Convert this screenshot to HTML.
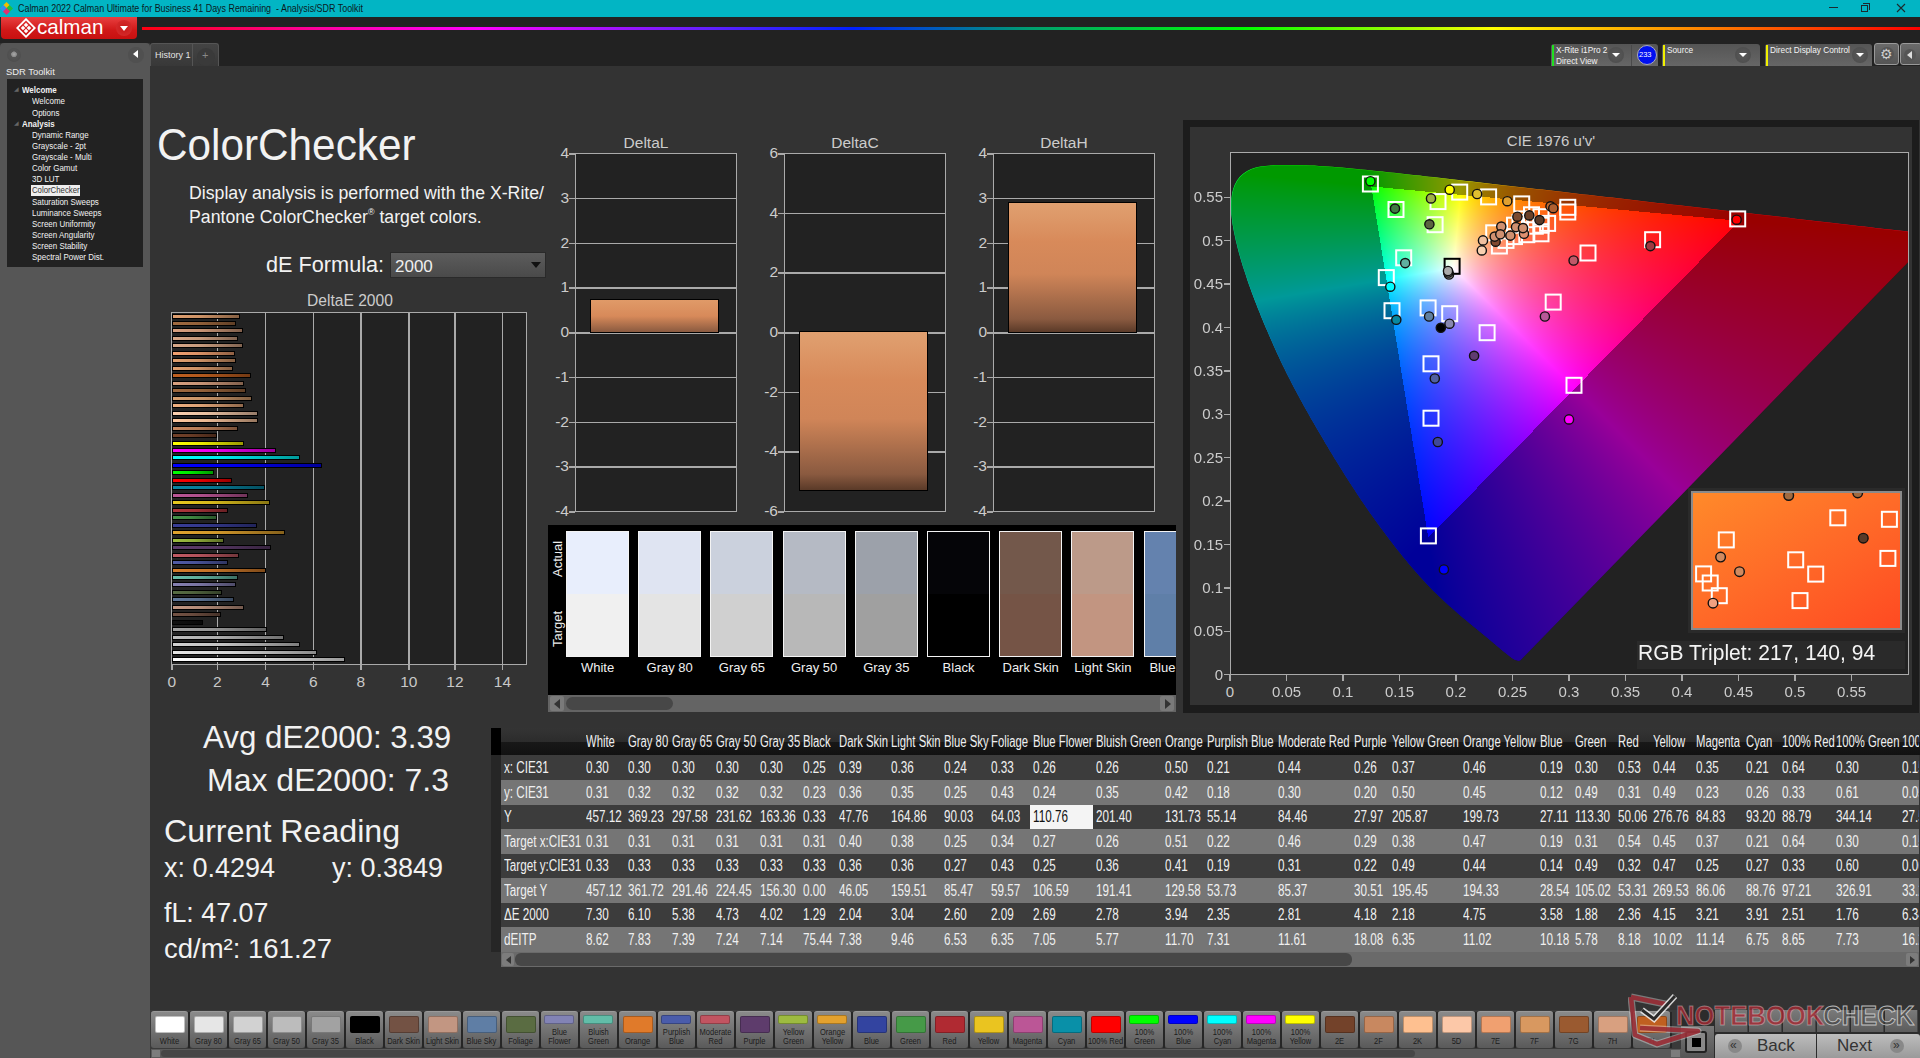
<!DOCTYPE html><html><head><meta charset="utf-8"><style>
*{margin:0;padding:0;box-sizing:border-box}
html,body{width:1920px;height:1058px;overflow:hidden;background:#333;font-family:"Liberation Sans",sans-serif;color:#eee}
.a{position:absolute}
.t{position:absolute;white-space:nowrap;line-height:1}
</style></head><body>

<div class="a" style="left:0;top:0;width:1920px;height:17px;background:#02b5c4"></div>
<div class="a" style="left:4px;top:3px;width:5px;height:5px;background:#f0c000;transform:rotate(45deg)"></div>
<div class="a" style="left:1px;top:6px;width:5px;height:5px;background:#3090f0;transform:rotate(45deg)"></div>
<div class="a" style="left:7px;top:6px;width:5px;height:5px;background:#20c040;transform:rotate(45deg)"></div>
<div class="a" style="left:4px;top:9px;width:5px;height:5px;background:#e03070;transform:rotate(45deg)"></div>
<div class="t" style="left:18px;top:3px;font-size:11px;color:#0a1a1e;transform:scaleX(0.81);transform-origin:0 0">Calman 2022 Calman Ultimate for Business 41 Days Remaining &nbsp;- Analysis/SDR Toolkit</div>
<div class="a" style="left:1829px;top:7px;width:9px;height:1px;background:#1a2a2e"></div>
<div class="a" style="left:1863px;top:3px;width:7px;height:7px;border:1px solid #1a2a2e;border-left:none;border-bottom:none"></div><div class="a" style="left:1861px;top:5px;width:7px;height:7px;border:1px solid #1a2a2e;background:#02b5c4"></div>
<svg class="a" style="left:1896px;top:3px" width="10" height="10"><path d="M1 1L9 9M9 1L1 9" stroke="#1a2a2e" stroke-width="1.1"/></svg>
<div class="a" style="left:0;top:17px;width:1920px;height:26px;background:#222"></div>
<div class="a" style="left:1px;top:17px;width:136px;height:22px;background:linear-gradient(#e84040,#d01818 60%,#c81010);border-radius:0 0 4px 4px"></div>
<div class="t" style="left:37px;top:17px;font-size:20.6px;color:#fff">calman</div>
<svg class="a" style="left:15.7px;top:18.1px" width="20" height="20"><g transform="rotate(45 10 10)"><rect x="3.8" y="3.8" width="12.4" height="12.4" fill="none" stroke="#fff" stroke-width="1.8"/><rect x="6.3" y="6.3" width="3.2" height="3.2" fill="#fff"/><rect x="10.5" y="6.3" width="3.2" height="3.2" fill="#fff"/><rect x="6.3" y="10.5" width="3.2" height="3.2" fill="#fff"/><rect x="10.5" y="10.5" width="3.2" height="3.2" fill="#fff"/></g></svg>
<div class="a" style="left:116px;top:20px;width:16px;height:16px;border-radius:8px;background:radial-gradient(#c81818,#d83030)"></div>
<div class="a" style="left:120px;top:26px;width:0;height:0;border-left:4px solid transparent;border-right:4px solid transparent;border-top:5px solid #fff"></div>
<div class="a" style="left:142px;top:27px;width:1778px;height:3px;background:linear-gradient(90deg,#ff0010 0%,#ff00a0 10%,#ff00ff 19%,#6020ff 32%,#0020ff 40%,#00a070 50%,#00ff00 62%,#b0ff00 72%,#ffff00 76%,#ffa000 85%,#ff0000 100%)"></div>
<div class="a" style="left:0;top:43px;width:150px;height:1015px;background:#565656;border-radius:4px 4px 0 0"></div>
<div class="a" style="left:7px;top:48px;width:14px;height:14px;border-radius:7px;background:radial-gradient(circle at 50% 45%,#aaa 0,#888 25%,#555 30%,#4e4e4e 70%,#5a5a5a 100%)"></div>
<div class="a" style="left:128px;top:47px;width:16px;height:16px;border-radius:8px;background:#505050"></div>
<div class="a" style="left:133px;top:50px;width:0;height:0;border-top:4px solid transparent;border-bottom:4px solid transparent;border-right:5px solid #fff"></div>
<div class="t" style="left:6px;top:67px;font-size:9.4px;color:#eee">SDR Toolkit</div>
<div class="a" style="left:7px;top:79px;width:136px;height:188px;background:#222"></div>
<div class="t" style="left:22px;top:86.3px;font-size:8.4px;color:#f2f2f2;font-weight:bold;transform:scaleX(0.95);transform-origin:0 0">Welcome</div>
<div class="t" style="left:32px;top:97.4px;font-size:8.4px;color:#f2f2f2;transform:scaleX(0.95);transform-origin:0 0">Welcome</div>
<div class="t" style="left:32px;top:108.5px;font-size:8.4px;color:#f2f2f2;transform:scaleX(0.95);transform-origin:0 0">Options</div>
<div class="t" style="left:22px;top:119.7px;font-size:8.4px;color:#f2f2f2;font-weight:bold;transform:scaleX(0.95);transform-origin:0 0">Analysis</div>
<div class="t" style="left:32px;top:130.8px;font-size:8.4px;color:#f2f2f2;transform:scaleX(0.95);transform-origin:0 0">Dynamic Range</div>
<div class="t" style="left:32px;top:141.9px;font-size:8.4px;color:#f2f2f2;transform:scaleX(0.95);transform-origin:0 0">Grayscale - 2pt</div>
<div class="t" style="left:32px;top:153.0px;font-size:8.4px;color:#f2f2f2;transform:scaleX(0.95);transform-origin:0 0">Grayscale - Multi</div>
<div class="t" style="left:32px;top:164.1px;font-size:8.4px;color:#f2f2f2;transform:scaleX(0.95);transform-origin:0 0">Color Gamut</div>
<div class="t" style="left:32px;top:175.3px;font-size:8.4px;color:#f2f2f2;transform:scaleX(0.95);transform-origin:0 0">3D LUT</div>
<div class="a" style="left:31px;top:185.1px;width:49px;height:10.5px;background:#eee"></div>
<div class="t" style="left:32px;top:186.4px;font-size:8.4px;color:#333;transform:scaleX(0.93);transform-origin:0 0">ColorChecker</div>
<div class="t" style="left:32px;top:197.5px;font-size:8.4px;color:#f2f2f2;transform:scaleX(0.95);transform-origin:0 0">Saturation Sweeps</div>
<div class="t" style="left:32px;top:208.6px;font-size:8.4px;color:#f2f2f2;transform:scaleX(0.95);transform-origin:0 0">Luminance Sweeps</div>
<div class="t" style="left:32px;top:219.7px;font-size:8.4px;color:#f2f2f2;transform:scaleX(0.95);transform-origin:0 0">Screen Uniformity</div>
<div class="t" style="left:32px;top:230.9px;font-size:8.4px;color:#f2f2f2;transform:scaleX(0.95);transform-origin:0 0">Screen Angularity</div>
<div class="t" style="left:32px;top:242.0px;font-size:8.4px;color:#f2f2f2;transform:scaleX(0.95);transform-origin:0 0">Screen Stability</div>
<div class="t" style="left:32px;top:253.1px;font-size:8.4px;color:#f2f2f2;transform:scaleX(0.95);transform-origin:0 0">Spectral Power Dist.</div>
<div class="t" style="left:14px;top:86px;font-size:6px;color:#666">&#9698;</div>
<div class="t" style="left:14px;top:120px;font-size:6px;color:#666">&#9698;</div>
<div class="a" style="left:150px;top:43px;width:1770px;height:23px;background:#222"></div>
<div class="a" style="left:150px;top:43px;width:69px;height:23px;background:linear-gradient(#444,#383838);border:1px solid #555;border-bottom:none;border-radius:3px 3px 0 0"></div>
<div class="a" style="left:192px;top:44px;width:1px;height:22px;background:#555"></div>
<div class="t" style="left:155px;top:51px;font-size:9px;color:#e4e4e4">History 1</div>
<div class="a" style="left:197px;top:48px;width:18px;height:18px;border-radius:9px;background:#3a3a3a"></div>
<div class="t" style="left:202px;top:50px;font-size:11px;color:#888">+</div>
<div class="a" style="left:1551px;top:44px;width:107px;height:22px;background:linear-gradient(#555,#666);border-radius:3px 3px 0 0"></div>
<div class="a" style="left:1552px;top:45px;width:2px;height:21px;background:#20e020"></div>
<div class="t" style="left:1556px;top:46.0px;font-size:8.7px;color:#f4f4f4;transform:scaleX(0.95);transform-origin:0 0">X-Rite i1Pro 2</div>
<div class="t" style="left:1556px;top:56.5px;font-size:8.7px;color:#f4f4f4;transform:scaleX(0.95);transform-origin:0 0">Direct View</div>
<div class="a" style="left:1662px;top:44px;width:98px;height:22px;background:linear-gradient(#555,#666);border-radius:3px 3px 0 0"></div>
<div class="a" style="left:1663px;top:45px;width:2px;height:21px;background:#f0f000"></div>
<div class="t" style="left:1667px;top:46.0px;font-size:8.7px;color:#f4f4f4;transform:scaleX(0.95);transform-origin:0 0">Source</div>
<div class="a" style="left:1765px;top:44px;width:107px;height:22px;background:linear-gradient(#555,#666);border-radius:3px 3px 0 0"></div>
<div class="a" style="left:1766px;top:45px;width:2px;height:21px;background:#f0f000"></div>
<div class="t" style="left:1770px;top:46.0px;font-size:8.7px;color:#f4f4f4;transform:scaleX(0.95);transform-origin:0 0">Direct Display Control</div>
<div class="a" style="left:1608px;top:47px;width:16px;height:16px;border-radius:8px;background:radial-gradient(#5a5a5a,#4a4a4a)"></div>
<div class="a" style="left:1612px;top:53px;width:0;height:0;border-left:4px solid transparent;border-right:4px solid transparent;border-top:4px solid #fff"></div>
<div class="a" style="left:1735px;top:47px;width:16px;height:16px;border-radius:8px;background:radial-gradient(#5a5a5a,#4a4a4a)"></div>
<div class="a" style="left:1739px;top:53px;width:0;height:0;border-left:4px solid transparent;border-right:4px solid transparent;border-top:4px solid #fff"></div>
<div class="a" style="left:1852px;top:47px;width:16px;height:16px;border-radius:8px;background:radial-gradient(#5a5a5a,#4a4a4a)"></div>
<div class="a" style="left:1856px;top:53px;width:0;height:0;border-left:4px solid transparent;border-right:4px solid transparent;border-top:4px solid #fff"></div>
<div class="a" style="left:1631px;top:45px;width:1px;height:21px;background:#4a4a4a"></div>
<div class="a" style="left:1637px;top:45px;width:20px;height:20px;border-radius:10px;background:#0010f0;border:1px solid #aab"></div>
<div class="t" style="left:1639px;top:51px;font-size:7.5px;color:#fff">233</div>
<div class="a" style="left:1874px;top:43px;width:25px;height:22px;background:linear-gradient(#6a6a6a,#555);border-radius:3px;border:1px solid #999"></div><div class="a" style="left:1880px;top:47px;width:14px;height:14px;border-radius:7px;background:#555"></div>
<div class="t" style="left:1880px;top:47px;font-size:14px;color:#ccc">&#9881;</div>
<div class="a" style="left:1900px;top:43px;width:22px;height:22px;background:linear-gradient(#6a6a6a,#555);border-radius:3px;border:1px solid #999"></div>
<div class="a" style="left:1904px;top:49px;width:12px;height:12px;border-radius:6px;background:#555"></div>
<div class="a" style="left:1907px;top:51px;width:0;height:0;border-top:4px solid transparent;border-bottom:4px solid transparent;border-right:5px solid #ddd"></div>
<div class="t" style="left:157px;top:123px;font-size:44.2px;color:#f2f2f2;transform:scaleX(0.957);transform-origin:0 0" id="title">ColorChecker</div>
<div class="t" style="left:189px;top:182px;font-size:18px;color:#f2f2f2;line-height:23.5px;transform:scaleX(0.983);transform-origin:0 0" id="desc">Display analysis is performed with the X-Rite/<br>Pantone ColorChecker<span style="font-size:9px;position:relative;top:-8px;line-height:0">&reg;</span> target colors.</div>
<div class="t" style="left:266px;top:254px;font-size:21.7px;color:#f2f2f2" id="def">dE Formula:</div>
<div class="a" style="left:390px;top:252px;width:156px;height:26px;background:linear-gradient(#5c5c5c,#4a4a4a);border:1px solid #2a2a2a"></div>
<div class="t" style="left:395px;top:258px;font-size:17px;color:#eee">2000</div>
<div class="a" style="left:531px;top:262px;width:0;height:0;border-left:5px solid transparent;border-right:5px solid transparent;border-top:6px solid #111"></div>
<div class="t" style="left:307px;top:293px;font-size:15.6px;color:#ccc" id="detitle">DeltaE 2000</div>
<div class="a" style="left:170.8px;top:312.3px;width:356.4px;height:352.9px;background:#222;border:1.5px solid #aaa"></div>
<div class="a" style="left:216.7px;top:313px;width:1.5px;height:351.5px;background:#aaa"></div>
<div class="a" style="left:264.8px;top:313px;width:1.5px;height:351.5px;background:#aaa"></div>
<div class="a" style="left:312.7px;top:313px;width:1.5px;height:351.5px;background:#aaa"></div>
<div class="a" style="left:360.2px;top:313px;width:1.5px;height:351.5px;background:#aaa"></div>
<div class="a" style="left:408.1px;top:313px;width:1.5px;height:351.5px;background:#aaa"></div>
<div class="a" style="left:454.2px;top:313px;width:1.5px;height:351.5px;background:#aaa"></div>
<div class="a" style="left:501.7px;top:313px;width:1.5px;height:351.5px;background:#aaa"></div>
<div class="a" style="left:171.2px;top:664.5px;width:1.5px;height:5px;background:#aaa"></div>
<div class="t" style="left:151.9px;top:674px;width:40px;text-align:center;font-size:15.5px;color:#c8c8c8">0</div>
<div class="a" style="left:216.7px;top:664.5px;width:1.5px;height:5px;background:#aaa"></div>
<div class="t" style="left:197.4px;top:674px;width:40px;text-align:center;font-size:15.5px;color:#c8c8c8">2</div>
<div class="a" style="left:264.8px;top:664.5px;width:1.5px;height:5px;background:#aaa"></div>
<div class="t" style="left:245.5px;top:674px;width:40px;text-align:center;font-size:15.5px;color:#c8c8c8">4</div>
<div class="a" style="left:312.7px;top:664.5px;width:1.5px;height:5px;background:#aaa"></div>
<div class="t" style="left:293.4px;top:674px;width:40px;text-align:center;font-size:15.5px;color:#c8c8c8">6</div>
<div class="a" style="left:360.2px;top:664.5px;width:1.5px;height:5px;background:#aaa"></div>
<div class="t" style="left:340.9px;top:674px;width:40px;text-align:center;font-size:15.5px;color:#c8c8c8">8</div>
<div class="a" style="left:408.1px;top:664.5px;width:1.5px;height:5px;background:#aaa"></div>
<div class="t" style="left:388.8px;top:674px;width:40px;text-align:center;font-size:15.5px;color:#c8c8c8">10</div>
<div class="a" style="left:454.2px;top:664.5px;width:1.5px;height:5px;background:#aaa"></div>
<div class="t" style="left:434.9px;top:674px;width:40px;text-align:center;font-size:15.5px;color:#c8c8c8">12</div>
<div class="a" style="left:501.7px;top:664.5px;width:1.5px;height:5px;background:#aaa"></div>
<div class="t" style="left:482.4px;top:674px;width:40px;text-align:center;font-size:15.5px;color:#c8c8c8">14</div>
<div class="a" style="left:171.5px;top:657.1px;width:173.3px;height:5px;background:linear-gradient(90deg,#ffffff,#eaeaea 40%,#999999);border:1px solid #000"></div>
<div class="a" style="left:171.5px;top:649.6px;width:145.0px;height:5px;background:linear-gradient(90deg,#e6e6e6,#d3d3d3 40%,#8a8a8a);border:1px solid #000"></div>
<div class="a" style="left:171.5px;top:642.2px;width:128.0px;height:5px;background:linear-gradient(90deg,#d2d2d2,#c1c1c1 40%,#7e7e7e);border:1px solid #000"></div>
<div class="a" style="left:171.5px;top:634.7px;width:112.6px;height:5px;background:linear-gradient(90deg,#bcbcbc,#acacac 40%,#707070);border:1px solid #000"></div>
<div class="a" style="left:171.5px;top:627.2px;width:95.9px;height:5px;background:linear-gradient(90deg,#a2a2a2,#959595 40%,#616161);border:1px solid #000"></div>
<div class="a" style="left:171.5px;top:619.8px;width:31.4px;height:5px;background:linear-gradient(90deg,#101010,#0e0e0e 40%,#090909);border:1px solid #000"></div>
<div class="a" style="left:171.5px;top:612.3px;width:49.1px;height:5px;background:linear-gradient(90deg,#735244,#694b3e 40%,#453128);border:1px solid #000"></div>
<div class="a" style="left:171.5px;top:604.8px;width:72.7px;height:5px;background:linear-gradient(90deg,#c29682,#b28a77 40%,#745a4e);border:1px solid #000"></div>
<div class="a" style="left:171.5px;top:597.3px;width:62.4px;height:5px;background:linear-gradient(90deg,#627a9d,#5a7090 40%,#3a495e);border:1px solid #000"></div>
<div class="a" style="left:171.5px;top:589.9px;width:50.3px;height:5px;background:linear-gradient(90deg,#576c43,#50633d 40%,#344028);border:1px solid #000"></div>
<div class="a" style="left:171.5px;top:582.4px;width:64.5px;height:5px;background:linear-gradient(90deg,#8580b1,#7a75a2 40%,#4f4c6a);border:1px solid #000"></div>
<div class="a" style="left:171.5px;top:574.9px;width:66.6px;height:5px;background:linear-gradient(90deg,#67bdaa,#5ead9c 40%,#3d7166);border:1px solid #000"></div>
<div class="a" style="left:171.5px;top:567.5px;width:94.0px;height:5px;background:linear-gradient(90deg,#d67e2c,#c47328 40%,#804b1a);border:1px solid #000"></div>
<div class="a" style="left:171.5px;top:560.0px;width:56.5px;height:5px;background:linear-gradient(90deg,#505ba6,#495398 40%,#303663);border:1px solid #000"></div>
<div class="a" style="left:171.5px;top:552.5px;width:67.3px;height:5px;background:linear-gradient(90deg,#c15a63,#b1525b 40%,#73363b);border:1px solid #000"></div>
<div class="a" style="left:171.5px;top:545.1px;width:99.6px;height:5px;background:linear-gradient(90deg,#5e3c6c,#563763 40%,#382440);border:1px solid #000"></div>
<div class="a" style="left:171.5px;top:537.6px;width:52.4px;height:5px;background:linear-gradient(90deg,#9dbc40,#90ac3a 40%,#5e7026);border:1px solid #000"></div>
<div class="a" style="left:171.5px;top:530.1px;width:113.1px;height:5px;background:linear-gradient(90deg,#e0a32e,#ce952a 40%,#86611b);border:1px solid #000"></div>
<div class="a" style="left:171.5px;top:522.6px;width:85.5px;height:5px;background:linear-gradient(90deg,#383d96,#33388a 40%,#21245a);border:1px solid #000"></div>
<div class="a" style="left:171.5px;top:515.2px;width:45.4px;height:5px;background:linear-gradient(90deg,#469449,#408843 40%,#2a582b);border:1px solid #000"></div>
<div class="a" style="left:171.5px;top:507.7px;width:56.7px;height:5px;background:linear-gradient(90deg,#af363c,#a13137 40%,#692024);border:1px solid #000"></div>
<div class="a" style="left:171.5px;top:500.2px;width:98.9px;height:5px;background:linear-gradient(90deg,#e7c71f,#d4b71c 40%,#8a7712);border:1px solid #000"></div>
<div class="a" style="left:171.5px;top:492.8px;width:76.8px;height:5px;background:linear-gradient(90deg,#bb5695,#ac4f89 40%,#703359);border:1px solid #000"></div>
<div class="a" style="left:171.5px;top:485.3px;width:93.3px;height:5px;background:linear-gradient(90deg,#0885a1,#077a94 40%,#044f60);border:1px solid #000"></div>
<div class="a" style="left:171.5px;top:477.8px;width:60.2px;height:5px;background:linear-gradient(90deg,#ff0000,#ea0000 40%,#990000);border:1px solid #000"></div>
<div class="a" style="left:171.5px;top:470.4px;width:42.5px;height:5px;background:linear-gradient(90deg,#00ff00,#00ea00 40%,#009900);border:1px solid #000"></div>
<div class="a" style="left:171.5px;top:462.9px;width:150.6px;height:5px;background:linear-gradient(90deg,#0000ff,#0000ea 40%,#000099);border:1px solid #000"></div>
<div class="a" style="left:171.5px;top:455.4px;width:128.9px;height:5px;background:linear-gradient(90deg,#00ffff,#00eaea 40%,#009999);border:1px solid #000"></div>
<div class="a" style="left:171.5px;top:447.9px;width:104.4px;height:5px;background:linear-gradient(90deg,#ff00ff,#ea00ea 40%,#990099);border:1px solid #000"></div>
<div class="a" style="left:171.5px;top:440.5px;width:72.5px;height:5px;background:linear-gradient(90deg,#ffff00,#eaea00 40%,#999900);border:1px solid #000"></div>
<div class="a" style="left:171.5px;top:433.0px;width:45.6px;height:5px;background:linear-gradient(90deg,#73422a,#693c26 40%,#452719);border:1px solid #000"></div>
<div class="a" style="left:171.5px;top:425.5px;width:66.8px;height:5px;background:linear-gradient(90deg,#c88860,#b87d58 40%,#785139);border:1px solid #000"></div>
<div class="a" style="left:171.5px;top:418.1px;width:86.2px;height:5px;background:linear-gradient(90deg,#fec8a0,#e9b893 40%,#987860);border:1px solid #000"></div>
<div class="a" style="left:171.5px;top:410.6px;width:86.9px;height:5px;background:linear-gradient(90deg,#fcd0b0,#e7bfa1 40%,#977c69);border:1px solid #000"></div>
<div class="a" style="left:171.5px;top:403.1px;width:72.7px;height:5px;background:linear-gradient(90deg,#f0b080,#dca175 40%,#90694c);border:1px solid #000"></div>
<div class="a" style="left:171.5px;top:395.7px;width:80.3px;height:5px;background:linear-gradient(90deg,#d8a070,#c69367 40%,#816043);border:1px solid #000"></div>
<div class="a" style="left:171.5px;top:388.2px;width:74.9px;height:5px;background:linear-gradient(90deg,#a06a40,#93613a 40%,#603f26);border:1px solid #000"></div>
<div class="a" style="left:171.5px;top:380.7px;width:72.7px;height:5px;background:linear-gradient(90deg,#d8a080,#c69375 40%,#81604c);border:1px solid #000"></div>
<div class="a" style="left:171.5px;top:373.2px;width:79.1px;height:5px;background:linear-gradient(90deg,#c06020,#b0581d 40%,#733913);border:1px solid #000"></div>
<div class="a" style="left:171.5px;top:365.8px;width:61.7px;height:5px;background:linear-gradient(90deg,#e0a070,#ce9367 40%,#866043);border:1px solid #000"></div>
<div class="a" style="left:171.5px;top:358.3px;width:64.7px;height:5px;background:linear-gradient(90deg,#e0a070,#ce9367 40%,#866043);border:1px solid #000"></div>
<div class="a" style="left:171.5px;top:350.8px;width:63.5px;height:5px;background:linear-gradient(90deg,#f0a070,#dc9367 40%,#906043);border:1px solid #000"></div>
<div class="a" style="left:171.5px;top:343.4px;width:71.6px;height:5px;background:linear-gradient(90deg,#d8a888,#c69a7d 40%,#816451);border:1px solid #000"></div>
<div class="a" style="left:171.5px;top:335.9px;width:66.8px;height:5px;background:linear-gradient(90deg,#d8a888,#c69a7d 40%,#816451);border:1px solid #000"></div>
<div class="a" style="left:171.5px;top:328.4px;width:71.3px;height:5px;background:linear-gradient(90deg,#d8a080,#c69375 40%,#81604c);border:1px solid #000"></div>
<div class="a" style="left:171.5px;top:321.0px;width:64.7px;height:5px;background:linear-gradient(90deg,#a06a40,#93613a 40%,#603f26);border:1px solid #000"></div>
<div class="a" style="left:171.5px;top:313.5px;width:68.7px;height:5px;background:linear-gradient(90deg,#e0a070,#ce9367 40%,#866043);border:1px solid #000"></div>
<div class="t" style="left:565px;top:135px;width:162px;text-align:center;font-size:15.5px;color:#ccc">DeltaL</div>
<div class="a" style="left:574.5px;top:153px;width:162.5px;height:359px;background:#222;border:1.5px solid #aaa"></div>
<div class="a" style="left:569px;top:153.0px;width:6px;height:1.5px;background:#aaa"></div>
<div class="t" style="left:535px;top:145.0px;width:34px;text-align:right;font-size:15.5px;color:#ccc">4</div>
<div class="a" style="left:575px;top:197.8px;width:162px;height:1.5px;background:#aaa"></div>
<div class="a" style="left:569px;top:197.8px;width:6px;height:1.5px;background:#aaa"></div>
<div class="t" style="left:535px;top:189.8px;width:34px;text-align:right;font-size:15.5px;color:#ccc">3</div>
<div class="a" style="left:575px;top:242.5px;width:162px;height:1.5px;background:#aaa"></div>
<div class="a" style="left:569px;top:242.5px;width:6px;height:1.5px;background:#aaa"></div>
<div class="t" style="left:535px;top:234.5px;width:34px;text-align:right;font-size:15.5px;color:#ccc">2</div>
<div class="a" style="left:575px;top:287.2px;width:162px;height:1.5px;background:#aaa"></div>
<div class="a" style="left:569px;top:287.2px;width:6px;height:1.5px;background:#aaa"></div>
<div class="t" style="left:535px;top:279.2px;width:34px;text-align:right;font-size:15.5px;color:#ccc">1</div>
<div class="a" style="left:575px;top:332.0px;width:162px;height:1.5px;background:#aaa"></div>
<div class="a" style="left:569px;top:332.0px;width:6px;height:1.5px;background:#aaa"></div>
<div class="t" style="left:535px;top:324.0px;width:34px;text-align:right;font-size:15.5px;color:#ccc">0</div>
<div class="a" style="left:575px;top:376.8px;width:162px;height:1.5px;background:#aaa"></div>
<div class="a" style="left:569px;top:376.8px;width:6px;height:1.5px;background:#aaa"></div>
<div class="t" style="left:535px;top:368.8px;width:34px;text-align:right;font-size:15.5px;color:#ccc">-1</div>
<div class="a" style="left:575px;top:421.5px;width:162px;height:1.5px;background:#aaa"></div>
<div class="a" style="left:569px;top:421.5px;width:6px;height:1.5px;background:#aaa"></div>
<div class="t" style="left:535px;top:413.5px;width:34px;text-align:right;font-size:15.5px;color:#ccc">-2</div>
<div class="a" style="left:575px;top:466.2px;width:162px;height:1.5px;background:#aaa"></div>
<div class="a" style="left:569px;top:466.2px;width:6px;height:1.5px;background:#aaa"></div>
<div class="t" style="left:535px;top:458.2px;width:34px;text-align:right;font-size:15.5px;color:#ccc">-3</div>
<div class="a" style="left:569px;top:511.0px;width:6px;height:1.5px;background:#aaa"></div>
<div class="t" style="left:535px;top:503.0px;width:34px;text-align:right;font-size:15.5px;color:#ccc">-4</div>
<div class="a" style="left:590px;top:299px;width:129px;height:34px;background:linear-gradient(#e09a68,#d88a5a 50%,#8a5a40 100%);border:1.5px solid #000"></div>
<div class="t" style="left:774px;top:135px;width:162px;text-align:center;font-size:15.5px;color:#ccc">DeltaC</div>
<div class="a" style="left:783.5px;top:153px;width:162.5px;height:359px;background:#222;border:1.5px solid #aaa"></div>
<div class="a" style="left:778px;top:153.0px;width:6px;height:1.5px;background:#aaa"></div>
<div class="t" style="left:744px;top:145.0px;width:34px;text-align:right;font-size:15.5px;color:#ccc">6</div>
<div class="a" style="left:784px;top:212.7px;width:162px;height:1.5px;background:#aaa"></div>
<div class="a" style="left:778px;top:212.7px;width:6px;height:1.5px;background:#aaa"></div>
<div class="t" style="left:744px;top:204.7px;width:34px;text-align:right;font-size:15.5px;color:#ccc">4</div>
<div class="a" style="left:784px;top:272.3px;width:162px;height:1.5px;background:#aaa"></div>
<div class="a" style="left:778px;top:272.3px;width:6px;height:1.5px;background:#aaa"></div>
<div class="t" style="left:744px;top:264.3px;width:34px;text-align:right;font-size:15.5px;color:#ccc">2</div>
<div class="a" style="left:784px;top:332.0px;width:162px;height:1.5px;background:#aaa"></div>
<div class="a" style="left:778px;top:332.0px;width:6px;height:1.5px;background:#aaa"></div>
<div class="t" style="left:744px;top:324.0px;width:34px;text-align:right;font-size:15.5px;color:#ccc">0</div>
<div class="a" style="left:784px;top:391.7px;width:162px;height:1.5px;background:#aaa"></div>
<div class="a" style="left:778px;top:391.7px;width:6px;height:1.5px;background:#aaa"></div>
<div class="t" style="left:744px;top:383.7px;width:34px;text-align:right;font-size:15.5px;color:#ccc">-2</div>
<div class="a" style="left:784px;top:451.3px;width:162px;height:1.5px;background:#aaa"></div>
<div class="a" style="left:778px;top:451.3px;width:6px;height:1.5px;background:#aaa"></div>
<div class="t" style="left:744px;top:443.3px;width:34px;text-align:right;font-size:15.5px;color:#ccc">-4</div>
<div class="a" style="left:778px;top:511.0px;width:6px;height:1.5px;background:#aaa"></div>
<div class="t" style="left:744px;top:503.0px;width:34px;text-align:right;font-size:15.5px;color:#ccc">-6</div>
<div class="a" style="left:799px;top:331px;width:129px;height:160px;background:linear-gradient(#e0a070 0%,#d88a5a 30%,#d08558 55%,#8a5a40 90%,#5a3a28 100%);border:1.5px solid #000"></div>
<div class="t" style="left:983px;top:135px;width:162px;text-align:center;font-size:15.5px;color:#ccc">DeltaH</div>
<div class="a" style="left:992.5px;top:153px;width:162.5px;height:359px;background:#222;border:1.5px solid #aaa"></div>
<div class="a" style="left:987px;top:153.0px;width:6px;height:1.5px;background:#aaa"></div>
<div class="t" style="left:953px;top:145.0px;width:34px;text-align:right;font-size:15.5px;color:#ccc">4</div>
<div class="a" style="left:993px;top:197.8px;width:162px;height:1.5px;background:#aaa"></div>
<div class="a" style="left:987px;top:197.8px;width:6px;height:1.5px;background:#aaa"></div>
<div class="t" style="left:953px;top:189.8px;width:34px;text-align:right;font-size:15.5px;color:#ccc">3</div>
<div class="a" style="left:993px;top:242.5px;width:162px;height:1.5px;background:#aaa"></div>
<div class="a" style="left:987px;top:242.5px;width:6px;height:1.5px;background:#aaa"></div>
<div class="t" style="left:953px;top:234.5px;width:34px;text-align:right;font-size:15.5px;color:#ccc">2</div>
<div class="a" style="left:993px;top:287.2px;width:162px;height:1.5px;background:#aaa"></div>
<div class="a" style="left:987px;top:287.2px;width:6px;height:1.5px;background:#aaa"></div>
<div class="t" style="left:953px;top:279.2px;width:34px;text-align:right;font-size:15.5px;color:#ccc">1</div>
<div class="a" style="left:993px;top:332.0px;width:162px;height:1.5px;background:#aaa"></div>
<div class="a" style="left:987px;top:332.0px;width:6px;height:1.5px;background:#aaa"></div>
<div class="t" style="left:953px;top:324.0px;width:34px;text-align:right;font-size:15.5px;color:#ccc">0</div>
<div class="a" style="left:993px;top:376.8px;width:162px;height:1.5px;background:#aaa"></div>
<div class="a" style="left:987px;top:376.8px;width:6px;height:1.5px;background:#aaa"></div>
<div class="t" style="left:953px;top:368.8px;width:34px;text-align:right;font-size:15.5px;color:#ccc">-1</div>
<div class="a" style="left:993px;top:421.5px;width:162px;height:1.5px;background:#aaa"></div>
<div class="a" style="left:987px;top:421.5px;width:6px;height:1.5px;background:#aaa"></div>
<div class="t" style="left:953px;top:413.5px;width:34px;text-align:right;font-size:15.5px;color:#ccc">-2</div>
<div class="a" style="left:993px;top:466.2px;width:162px;height:1.5px;background:#aaa"></div>
<div class="a" style="left:987px;top:466.2px;width:6px;height:1.5px;background:#aaa"></div>
<div class="t" style="left:953px;top:458.2px;width:34px;text-align:right;font-size:15.5px;color:#ccc">-3</div>
<div class="a" style="left:987px;top:511.0px;width:6px;height:1.5px;background:#aaa"></div>
<div class="t" style="left:953px;top:503.0px;width:34px;text-align:right;font-size:15.5px;color:#ccc">-4</div>
<div class="a" style="left:1008px;top:202px;width:129px;height:131px;background:linear-gradient(#e0a070 0%,#d88a5a 30%,#d08558 55%,#8a5a40 90%,#5a3a28 100%);border:1.5px solid #000"></div>
<div class="a" style="left:548px;top:525px;width:628px;height:170px;background:#000;overflow:hidden">
<div class="t" style="left:1px;top:62px;font-size:13px;color:#eee;transform:rotate(-90deg);transform-origin:0 0;top:52px;left:3px">Actual</div>
<div class="t" style="left:3px;top:122px;font-size:13px;color:#eee;transform:rotate(-90deg);transform-origin:0 0">Target</div>
<div class="a" style="left:18.0px;top:6px;width:63px;height:126px;border:1.5px solid #f4f4f4;background:linear-gradient(#e8eefc 50%,#f0f0f0 50%)"></div>
<div class="t" style="left:8.0px;top:135.5px;width:83px;text-align:center;font-size:13px;color:#f0f0f0">White</div>
<div class="a" style="left:90.2px;top:6px;width:63px;height:126px;border:1.5px solid #f4f4f4;background:linear-gradient(#dfe4f2 50%,#e4e4e4 50%)"></div>
<div class="t" style="left:80.2px;top:135.5px;width:83px;text-align:center;font-size:13px;color:#f0f0f0">Gray 80</div>
<div class="a" style="left:162.4px;top:6px;width:63px;height:126px;border:1.5px solid #f4f4f4;background:linear-gradient(#cbd1dd 50%,#d0d0d0 50%)"></div>
<div class="t" style="left:152.4px;top:135.5px;width:83px;text-align:center;font-size:13px;color:#f0f0f0">Gray 65</div>
<div class="a" style="left:234.6px;top:6px;width:63px;height:126px;border:1.5px solid #f4f4f4;background:linear-gradient(#b5bac4 50%,#b8b8b8 50%)"></div>
<div class="t" style="left:224.6px;top:135.5px;width:83px;text-align:center;font-size:13px;color:#f0f0f0">Gray 50</div>
<div class="a" style="left:306.8px;top:6px;width:63px;height:126px;border:1.5px solid #f4f4f4;background:linear-gradient(#9ca1aa 50%,#a0a0a0 50%)"></div>
<div class="t" style="left:296.8px;top:135.5px;width:83px;text-align:center;font-size:13px;color:#f0f0f0">Gray 35</div>
<div class="a" style="left:379.0px;top:6px;width:63px;height:126px;border:1.5px solid #f4f4f4;background:linear-gradient(#050508 50%,#000000 50%)"></div>
<div class="t" style="left:369.0px;top:135.5px;width:83px;text-align:center;font-size:13px;color:#f0f0f0">Black</div>
<div class="a" style="left:451.2px;top:6px;width:63px;height:126px;border:1.5px solid #f4f4f4;background:linear-gradient(#73584b 50%,#755446 50%)"></div>
<div class="t" style="left:441.2px;top:135.5px;width:83px;text-align:center;font-size:13px;color:#f0f0f0">Dark Skin</div>
<div class="a" style="left:523.4px;top:6px;width:63px;height:126px;border:1.5px solid #f4f4f4;background:linear-gradient(#bc9a89 50%,#c29581 50%)"></div>
<div class="t" style="left:513.4px;top:135.5px;width:83px;text-align:center;font-size:13px;color:#f0f0f0">Light Skin</div>
<div class="a" style="left:595.6px;top:6px;width:63px;height:126px;border:1.5px solid #f4f4f4;background:linear-gradient(#6482ae 50%,#5f7fa8 50%)"></div>
<div class="t" style="left:585.6px;top:135.5px;width:83px;text-align:center;font-size:13px;color:#f0f0f0">Blue Sky</div>
</div>
<div class="a" style="left:548px;top:695px;width:628px;height:17px;background:#646464"></div>
<div class="a" style="left:550px;top:696px;width:14px;height:15px;background:#7a7a7a;border-radius:2px"></div>
<div class="a" style="left:554px;top:699px;width:0;height:0;border-top:5px solid transparent;border-bottom:5px solid transparent;border-right:6px solid #333"></div>
<div class="a" style="left:566px;top:697px;width:107px;height:13px;background:#474747;border-radius:7px"></div>
<div class="a" style="left:1160px;top:696px;width:14px;height:15px;background:#7a7a7a;border-radius:2px"></div>
<div class="a" style="left:1165px;top:699px;width:0;height:0;border-top:5px solid transparent;border-bottom:5px solid transparent;border-left:6px solid #333"></div>
<div class="a" style="left:1183px;top:120px;width:736px;height:593px;background:#1c1c1c"></div>
<div class="a" style="left:1190px;top:127px;width:722px;height:578px;background:#333"></div>
<div class="t" style="left:1190px;top:133px;width:722px;text-align:center;font-size:15px;color:#ccc" id="ciet">CIE 1976 u'v'</div>
<div class="a" style="left:1230px;top:152px;width:679px;height:523px;background:#222;border:1.5px solid #aaa;overflow:hidden">
<svg class="a" style="left:-1.5px;top:-1.5px" width="679" height="523"><defs><clipPath id="loc"><path d="M290.3,508.4 L289.0,508.9 L285.0,508.0 L282.1,506.2 L278.1,503.1 L275.2,500.7 L271.8,497.9 L268.3,495.0 L265.3,492.4 L260.6,488.6 L256.1,484.8 L252.4,481.8 L248.5,478.5 L244.2,475.0 L240.8,472.2 L237.3,469.3 L233.6,466.2 L229.7,462.9 L226.4,460.1 L223.1,457.1 L219.5,454.0 L215.9,450.7 L212.1,447.1 L209.3,444.4 L206.5,441.7 L203.6,438.9 L200.7,436.0 L197.6,432.8 L194.4,429.3 L190.9,425.6 L188.7,423.0 L186.3,420.3 L183.9,417.6 L181.5,414.7 L178.9,411.7 L176.4,408.6 L173.7,405.4 L171.1,402.1 L168.4,398.7 L165.6,395.2 L162.8,391.6 L160.6,388.7 L158.4,385.8 L156.1,382.7 L153.8,379.6 L151.4,376.5 L149.1,373.2 L146.7,369.9 L144.3,366.6 L141.9,363.2 L139.4,359.7 L137.0,356.2 L134.5,352.6 L132.0,348.9 L129.6,345.2 L127.4,342.0 L125.2,338.6 L123.0,335.2 L120.7,331.7 L118.5,328.2 L116.2,324.7 L113.9,321.1 L111.7,317.4 L109.4,313.8 L107.1,310.1 L104.8,306.4 L102.5,302.6 L100.3,298.9 L98.0,295.1 L95.8,291.4 L93.6,287.6 L91.5,284.1 L89.4,280.5 L87.3,276.9 L85.2,273.2 L83.0,269.5 L80.9,265.9 L78.8,262.1 L76.7,258.4 L74.6,254.7 L72.6,251.0 L70.5,247.3 L68.5,243.5 L66.5,239.8 L64.6,236.2 L62.6,232.5 L60.8,228.8 L58.9,225.2 L57.0,221.4 L55.1,217.6 L53.2,213.7 L51.4,209.9 L49.6,206.0 L47.8,202.2 L46.1,198.4 L44.3,194.6 L42.7,190.8 L41.0,187.0 L39.4,183.3 L37.8,179.6 L36.2,176.0 L34.7,172.4 L33.3,168.9 L31.8,165.4 L30.1,161.1 L28.4,157.0 L26.8,152.8 L25.2,148.7 L23.7,144.7 L22.2,140.7 L20.8,136.8 L19.4,132.9 L18.1,129.2 L16.9,125.5 L15.7,121.8 L14.5,118.3 L13.4,114.9 L11.9,110.1 L10.6,105.5 L9.3,101.0 L8.2,96.7 L7.2,92.5 L6.2,88.5 L5.4,84.7 L4.6,81.0 L3.9,77.4 L3.0,72.2 L2.4,67.5 L1.9,63.1 L1.7,58.9 L1.6,55.0 L1.6,51.2 L2.0,46.0 L2.7,41.3 L3.8,37.1 L5.2,33.3 L7.6,28.8 L10.5,25.0 L13.9,21.9 L17.6,19.4 L21.7,17.5 L26.1,16.1 L30.8,15.0 L35.6,14.4 L40.7,13.9 L45.9,13.6 L51.2,13.5 L56.6,13.4 L60.6,13.4 L64.6,13.4 L68.6,13.5 L72.7,13.6 L76.8,13.7 L81.0,13.9 L85.2,14.1 L89.5,14.4 L93.9,14.7 L98.4,15.0 L103.0,15.3 L107.6,15.7 L112.4,16.1 L117.3,16.5 L122.2,17.0 L127.4,17.5 L131.5,17.9 L135.8,18.3 L140.1,18.7 L144.5,19.2 L149.0,19.7 L152.9,20.1 L156.8,20.5 L160.7,20.9 L164.7,21.3 L168.8,21.8 L173.0,22.2 L177.3,22.7 L181.6,23.2 L186.0,23.7 L190.4,24.1 L194.9,24.7 L199.6,25.2 L203.6,25.6 L207.7,26.1 L211.8,26.5 L216.0,27.0 L220.2,27.5 L224.5,28.0 L228.9,28.5 L232.8,28.9 L236.7,29.4 L240.7,29.8 L244.7,30.3 L248.7,30.8 L252.9,31.2 L257.0,31.7 L261.2,32.2 L265.4,32.7 L269.7,33.2 L274.1,33.7 L278.5,34.2 L282.9,34.7 L287.4,35.2 L291.9,35.7 L296.4,36.2 L300.5,36.7 L304.7,37.2 L308.8,37.7 L313.0,38.1 L317.2,38.6 L321.5,39.1 L325.8,39.6 L330.1,40.1 L334.4,40.6 L338.3,41.0 L342.3,41.5 L346.3,42.0 L350.3,42.4 L354.3,42.9 L358.3,43.3 L362.4,43.8 L366.4,44.3 L370.5,44.7 L374.6,45.2 L378.7,45.7 L382.8,46.1 L386.9,46.6 L391.1,47.1 L395.3,47.6 L399.4,48.1 L403.6,48.5 L407.7,49.0 L411.8,49.5 L415.9,50.0 L420.0,50.4 L424.0,50.9 L428.1,51.4 L432.1,51.8 L436.1,52.3 L440.1,52.7 L444.1,53.2 L448.1,53.6 L452.0,54.1 L456.0,54.6 L460.4,55.1 L464.8,55.6 L469.2,56.1 L473.6,56.6 L477.9,57.1 L482.3,57.6 L486.5,58.1 L490.8,58.5 L494.9,59.0 L499.5,59.6 L504.1,60.1 L508.6,60.6 L513.0,61.1 L517.4,61.6 L521.7,62.1 L525.9,62.6 L530.1,63.0 L534.8,63.6 L539.4,64.1 L544.0,64.6 L548.4,65.1 L552.8,65.6 L557.1,66.1 L561.3,66.6 L566.0,67.2 L570.6,67.7 L575.1,68.2 L579.5,68.7 L583.7,69.2 L587.8,69.7 L592.6,70.2 L597.2,70.8 L601.7,71.3 L606.0,71.8 L610.1,72.2 L614.8,72.8 L619.0,73.2 L623.4,73.8 L628.8,74.4 L632.6,74.8 L636.9,75.3 L641.4,75.8 L646.1,76.4 L650.7,76.9 L655.0,77.4 L658.8,77.8 L664.7,78.5 L669.8,79.1 L674.4,79.6 L678.5,80.1 L685.0,80.8 L690.2,81.4 L695.9,82.1 L700.5,82.6 L704.4,83.1 Z"/></clipPath></defs></svg>
<div class="a" style="left:-1.5px;top:-1.5px;width:679px;height:523px;clip-path:url(#loc);background:radial-gradient(ellipse 90px 90px at 223.5px 116.2px,rgba(255,255,255,1) 0%,rgba(255,255,255,0.6) 35%,rgba(255,255,255,0) 100%),conic-gradient(from 0deg at 223.5px 116.2px,#d0ff00 0deg,#ffff00 11deg,#ff9000 45deg,#ff0000 80deg,#ff0060 105deg,#ff00ff 136deg,#8000ff 160deg,#0010ff 178deg,#0020ff 200deg,#0080ff 235deg,#00ffff 262deg,#00ff80 282deg,#00ff00 300deg,#40ff00 330deg,#d0ff00 360deg)"></div>
<svg class="a" style="left:-1.5px;top:-1.5px" width="679" height="523"><path d="M290.3,508.4 L289.0,508.9 L285.0,508.0 L282.1,506.2 L278.1,503.1 L275.2,500.7 L271.8,497.9 L268.3,495.0 L265.3,492.4 L260.6,488.6 L256.1,484.8 L252.4,481.8 L248.5,478.5 L244.2,475.0 L240.8,472.2 L237.3,469.3 L233.6,466.2 L229.7,462.9 L226.4,460.1 L223.1,457.1 L219.5,454.0 L215.9,450.7 L212.1,447.1 L209.3,444.4 L206.5,441.7 L203.6,438.9 L200.7,436.0 L197.6,432.8 L194.4,429.3 L190.9,425.6 L188.7,423.0 L186.3,420.3 L183.9,417.6 L181.5,414.7 L178.9,411.7 L176.4,408.6 L173.7,405.4 L171.1,402.1 L168.4,398.7 L165.6,395.2 L162.8,391.6 L160.6,388.7 L158.4,385.8 L156.1,382.7 L153.8,379.6 L151.4,376.5 L149.1,373.2 L146.7,369.9 L144.3,366.6 L141.9,363.2 L139.4,359.7 L137.0,356.2 L134.5,352.6 L132.0,348.9 L129.6,345.2 L127.4,342.0 L125.2,338.6 L123.0,335.2 L120.7,331.7 L118.5,328.2 L116.2,324.7 L113.9,321.1 L111.7,317.4 L109.4,313.8 L107.1,310.1 L104.8,306.4 L102.5,302.6 L100.3,298.9 L98.0,295.1 L95.8,291.4 L93.6,287.6 L91.5,284.1 L89.4,280.5 L87.3,276.9 L85.2,273.2 L83.0,269.5 L80.9,265.9 L78.8,262.1 L76.7,258.4 L74.6,254.7 L72.6,251.0 L70.5,247.3 L68.5,243.5 L66.5,239.8 L64.6,236.2 L62.6,232.5 L60.8,228.8 L58.9,225.2 L57.0,221.4 L55.1,217.6 L53.2,213.7 L51.4,209.9 L49.6,206.0 L47.8,202.2 L46.1,198.4 L44.3,194.6 L42.7,190.8 L41.0,187.0 L39.4,183.3 L37.8,179.6 L36.2,176.0 L34.7,172.4 L33.3,168.9 L31.8,165.4 L30.1,161.1 L28.4,157.0 L26.8,152.8 L25.2,148.7 L23.7,144.7 L22.2,140.7 L20.8,136.8 L19.4,132.9 L18.1,129.2 L16.9,125.5 L15.7,121.8 L14.5,118.3 L13.4,114.9 L11.9,110.1 L10.6,105.5 L9.3,101.0 L8.2,96.7 L7.2,92.5 L6.2,88.5 L5.4,84.7 L4.6,81.0 L3.9,77.4 L3.0,72.2 L2.4,67.5 L1.9,63.1 L1.7,58.9 L1.6,55.0 L1.6,51.2 L2.0,46.0 L2.7,41.3 L3.8,37.1 L5.2,33.3 L7.6,28.8 L10.5,25.0 L13.9,21.9 L17.6,19.4 L21.7,17.5 L26.1,16.1 L30.8,15.0 L35.6,14.4 L40.7,13.9 L45.9,13.6 L51.2,13.5 L56.6,13.4 L60.6,13.4 L64.6,13.4 L68.6,13.5 L72.7,13.6 L76.8,13.7 L81.0,13.9 L85.2,14.1 L89.5,14.4 L93.9,14.7 L98.4,15.0 L103.0,15.3 L107.6,15.7 L112.4,16.1 L117.3,16.5 L122.2,17.0 L127.4,17.5 L131.5,17.9 L135.8,18.3 L140.1,18.7 L144.5,19.2 L149.0,19.7 L152.9,20.1 L156.8,20.5 L160.7,20.9 L164.7,21.3 L168.8,21.8 L173.0,22.2 L177.3,22.7 L181.6,23.2 L186.0,23.7 L190.4,24.1 L194.9,24.7 L199.6,25.2 L203.6,25.6 L207.7,26.1 L211.8,26.5 L216.0,27.0 L220.2,27.5 L224.5,28.0 L228.9,28.5 L232.8,28.9 L236.7,29.4 L240.7,29.8 L244.7,30.3 L248.7,30.8 L252.9,31.2 L257.0,31.7 L261.2,32.2 L265.4,32.7 L269.7,33.2 L274.1,33.7 L278.5,34.2 L282.9,34.7 L287.4,35.2 L291.9,35.7 L296.4,36.2 L300.5,36.7 L304.7,37.2 L308.8,37.7 L313.0,38.1 L317.2,38.6 L321.5,39.1 L325.8,39.6 L330.1,40.1 L334.4,40.6 L338.3,41.0 L342.3,41.5 L346.3,42.0 L350.3,42.4 L354.3,42.9 L358.3,43.3 L362.4,43.8 L366.4,44.3 L370.5,44.7 L374.6,45.2 L378.7,45.7 L382.8,46.1 L386.9,46.6 L391.1,47.1 L395.3,47.6 L399.4,48.1 L403.6,48.5 L407.7,49.0 L411.8,49.5 L415.9,50.0 L420.0,50.4 L424.0,50.9 L428.1,51.4 L432.1,51.8 L436.1,52.3 L440.1,52.7 L444.1,53.2 L448.1,53.6 L452.0,54.1 L456.0,54.6 L460.4,55.1 L464.8,55.6 L469.2,56.1 L473.6,56.6 L477.9,57.1 L482.3,57.6 L486.5,58.1 L490.8,58.5 L494.9,59.0 L499.5,59.6 L504.1,60.1 L508.6,60.6 L513.0,61.1 L517.4,61.6 L521.7,62.1 L525.9,62.6 L530.1,63.0 L534.8,63.6 L539.4,64.1 L544.0,64.6 L548.4,65.1 L552.8,65.6 L557.1,66.1 L561.3,66.6 L566.0,67.2 L570.6,67.7 L575.1,68.2 L579.5,68.7 L583.7,69.2 L587.8,69.7 L592.6,70.2 L597.2,70.8 L601.7,71.3 L606.0,71.8 L610.1,72.2 L614.8,72.8 L619.0,73.2 L623.4,73.8 L628.8,74.4 L632.6,74.8 L636.9,75.3 L641.4,75.8 L646.1,76.4 L650.7,76.9 L655.0,77.4 L658.8,77.8 L664.7,78.5 L669.8,79.1 L674.4,79.6 L678.5,80.1 L685.0,80.8 L690.2,81.4 L695.9,82.1 L700.5,82.6 L704.4,83.1 Z M509.3,68.8 L141.2,34.5 L198.2,385.6 Z" fill="rgba(0,0,0,0.42)" fill-rule="evenodd"/></svg>
<canvas id="cv" class="a" style="left:-1.5px;top:-1.5px" width="679" height="523"></canvas>
<script>(function(){var c=document.getElementById('cv');if(!c||!c.getContext)return;var ctx=c.getContext('2d');var W=c.width,H=c.height;
var off=document.createElement('canvas');off.width=W;off.height=H;var o=off.getContext('2d');var im=o.createImageData(W,H);var d=im.data;var G=0.85;
for(var j=0;j<H;j++){var v=(674.7-(152+j+0.5))/868;for(var i=0;i<W;i++){var u=(i+0.5)/1130;
var den=6*u-16*v+12;var x=9*u/den,y=4*v/den;if(y<1e-4)y=1e-4;var X=x/y,Z=(1-x-y)/y;
var r=3.2406*X-1.5372-0.4986*Z,g=-0.9689*X+1.8758+0.0415*Z,b=0.0557*X-0.2040+1.0570*Z;
var f=(r<0||g<0||b<0)?0.6:1;if(r<0)r=0;if(g<0)g=0;if(b<0)b=0;var m=Math.max(r,g,b);if(m<=0)m=1;
var k=(j*W+i)*4;d[k]=255*f*Math.pow(r/m,G);d[k+1]=255*f*Math.pow(g/m,G);d[k+2]=255*f*Math.pow(b/m,G);d[k+3]=255;}}
o.putImageData(im,0,0);ctx.beginPath();ctx.moveTo(290.3,508.4);ctx.lineTo(289.0,508.9);ctx.lineTo(285.0,508.0);ctx.lineTo(282.1,506.2);ctx.lineTo(278.1,503.1);ctx.lineTo(275.2,500.7);ctx.lineTo(271.8,497.9);ctx.lineTo(268.3,495.0);ctx.lineTo(265.3,492.4);ctx.lineTo(260.6,488.6);ctx.lineTo(256.1,484.8);ctx.lineTo(252.4,481.8);ctx.lineTo(248.5,478.5);ctx.lineTo(244.2,475.0);ctx.lineTo(240.8,472.2);ctx.lineTo(237.3,469.3);ctx.lineTo(233.6,466.2);ctx.lineTo(229.7,462.9);ctx.lineTo(226.4,460.1);ctx.lineTo(223.1,457.1);ctx.lineTo(219.5,454.0);ctx.lineTo(215.9,450.7);ctx.lineTo(212.1,447.1);ctx.lineTo(209.3,444.4);ctx.lineTo(206.5,441.7);ctx.lineTo(203.6,438.9);ctx.lineTo(200.7,436.0);ctx.lineTo(197.6,432.8);ctx.lineTo(194.4,429.3);ctx.lineTo(190.9,425.6);ctx.lineTo(188.7,423.0);ctx.lineTo(186.3,420.3);ctx.lineTo(183.9,417.6);ctx.lineTo(181.5,414.7);ctx.lineTo(178.9,411.7);ctx.lineTo(176.4,408.6);ctx.lineTo(173.7,405.4);ctx.lineTo(171.1,402.1);ctx.lineTo(168.4,398.7);ctx.lineTo(165.6,395.2);ctx.lineTo(162.8,391.6);ctx.lineTo(160.6,388.7);ctx.lineTo(158.4,385.8);ctx.lineTo(156.1,382.7);ctx.lineTo(153.8,379.6);ctx.lineTo(151.4,376.5);ctx.lineTo(149.1,373.2);ctx.lineTo(146.7,369.9);ctx.lineTo(144.3,366.6);ctx.lineTo(141.9,363.2);ctx.lineTo(139.4,359.7);ctx.lineTo(137.0,356.2);ctx.lineTo(134.5,352.6);ctx.lineTo(132.0,348.9);ctx.lineTo(129.6,345.2);ctx.lineTo(127.4,342.0);ctx.lineTo(125.2,338.6);ctx.lineTo(123.0,335.2);ctx.lineTo(120.7,331.7);ctx.lineTo(118.5,328.2);ctx.lineTo(116.2,324.7);ctx.lineTo(113.9,321.1);ctx.lineTo(111.7,317.4);ctx.lineTo(109.4,313.8);ctx.lineTo(107.1,310.1);ctx.lineTo(104.8,306.4);ctx.lineTo(102.5,302.6);ctx.lineTo(100.3,298.9);ctx.lineTo(98.0,295.1);ctx.lineTo(95.8,291.4);ctx.lineTo(93.6,287.6);ctx.lineTo(91.5,284.1);ctx.lineTo(89.4,280.5);ctx.lineTo(87.3,276.9);ctx.lineTo(85.2,273.2);ctx.lineTo(83.0,269.5);ctx.lineTo(80.9,265.9);ctx.lineTo(78.8,262.1);ctx.lineTo(76.7,258.4);ctx.lineTo(74.6,254.7);ctx.lineTo(72.6,251.0);ctx.lineTo(70.5,247.3);ctx.lineTo(68.5,243.5);ctx.lineTo(66.5,239.8);ctx.lineTo(64.6,236.2);ctx.lineTo(62.6,232.5);ctx.lineTo(60.8,228.8);ctx.lineTo(58.9,225.2);ctx.lineTo(57.0,221.4);ctx.lineTo(55.1,217.6);ctx.lineTo(53.2,213.7);ctx.lineTo(51.4,209.9);ctx.lineTo(49.6,206.0);ctx.lineTo(47.8,202.2);ctx.lineTo(46.1,198.4);ctx.lineTo(44.3,194.6);ctx.lineTo(42.7,190.8);ctx.lineTo(41.0,187.0);ctx.lineTo(39.4,183.3);ctx.lineTo(37.8,179.6);ctx.lineTo(36.2,176.0);ctx.lineTo(34.7,172.4);ctx.lineTo(33.3,168.9);ctx.lineTo(31.8,165.4);ctx.lineTo(30.1,161.1);ctx.lineTo(28.4,157.0);ctx.lineTo(26.8,152.8);ctx.lineTo(25.2,148.7);ctx.lineTo(23.7,144.7);ctx.lineTo(22.2,140.7);ctx.lineTo(20.8,136.8);ctx.lineTo(19.4,132.9);ctx.lineTo(18.1,129.2);ctx.lineTo(16.9,125.5);ctx.lineTo(15.7,121.8);ctx.lineTo(14.5,118.3);ctx.lineTo(13.4,114.9);ctx.lineTo(11.9,110.1);ctx.lineTo(10.6,105.5);ctx.lineTo(9.3,101.0);ctx.lineTo(8.2,96.7);ctx.lineTo(7.2,92.5);ctx.lineTo(6.2,88.5);ctx.lineTo(5.4,84.7);ctx.lineTo(4.6,81.0);ctx.lineTo(3.9,77.4);ctx.lineTo(3.0,72.2);ctx.lineTo(2.4,67.5);ctx.lineTo(1.9,63.1);ctx.lineTo(1.7,58.9);ctx.lineTo(1.6,55.0);ctx.lineTo(1.6,51.2);ctx.lineTo(2.0,46.0);ctx.lineTo(2.7,41.3);ctx.lineTo(3.8,37.1);ctx.lineTo(5.2,33.3);ctx.lineTo(7.6,28.8);ctx.lineTo(10.5,25.0);ctx.lineTo(13.9,21.9);ctx.lineTo(17.6,19.4);ctx.lineTo(21.7,17.5);ctx.lineTo(26.1,16.1);ctx.lineTo(30.8,15.0);ctx.lineTo(35.6,14.4);ctx.lineTo(40.7,13.9);ctx.lineTo(45.9,13.6);ctx.lineTo(51.2,13.5);ctx.lineTo(56.6,13.4);ctx.lineTo(60.6,13.4);ctx.lineTo(64.6,13.4);ctx.lineTo(68.6,13.5);ctx.lineTo(72.7,13.6);ctx.lineTo(76.8,13.7);ctx.lineTo(81.0,13.9);ctx.lineTo(85.2,14.1);ctx.lineTo(89.5,14.4);ctx.lineTo(93.9,14.7);ctx.lineTo(98.4,15.0);ctx.lineTo(103.0,15.3);ctx.lineTo(107.6,15.7);ctx.lineTo(112.4,16.1);ctx.lineTo(117.3,16.5);ctx.lineTo(122.2,17.0);ctx.lineTo(127.4,17.5);ctx.lineTo(131.5,17.9);ctx.lineTo(135.8,18.3);ctx.lineTo(140.1,18.7);ctx.lineTo(144.5,19.2);ctx.lineTo(149.0,19.7);ctx.lineTo(152.9,20.1);ctx.lineTo(156.8,20.5);ctx.lineTo(160.7,20.9);ctx.lineTo(164.7,21.3);ctx.lineTo(168.8,21.8);ctx.lineTo(173.0,22.2);ctx.lineTo(177.3,22.7);ctx.lineTo(181.6,23.2);ctx.lineTo(186.0,23.7);ctx.lineTo(190.4,24.1);ctx.lineTo(194.9,24.7);ctx.lineTo(199.6,25.2);ctx.lineTo(203.6,25.6);ctx.lineTo(207.7,26.1);ctx.lineTo(211.8,26.5);ctx.lineTo(216.0,27.0);ctx.lineTo(220.2,27.5);ctx.lineTo(224.5,28.0);ctx.lineTo(228.9,28.5);ctx.lineTo(232.8,28.9);ctx.lineTo(236.7,29.4);ctx.lineTo(240.7,29.8);ctx.lineTo(244.7,30.3);ctx.lineTo(248.7,30.8);ctx.lineTo(252.9,31.2);ctx.lineTo(257.0,31.7);ctx.lineTo(261.2,32.2);ctx.lineTo(265.4,32.7);ctx.lineTo(269.7,33.2);ctx.lineTo(274.1,33.7);ctx.lineTo(278.5,34.2);ctx.lineTo(282.9,34.7);ctx.lineTo(287.4,35.2);ctx.lineTo(291.9,35.7);ctx.lineTo(296.4,36.2);ctx.lineTo(300.5,36.7);ctx.lineTo(304.7,37.2);ctx.lineTo(308.8,37.7);ctx.lineTo(313.0,38.1);ctx.lineTo(317.2,38.6);ctx.lineTo(321.5,39.1);ctx.lineTo(325.8,39.6);ctx.lineTo(330.1,40.1);ctx.lineTo(334.4,40.6);ctx.lineTo(338.3,41.0);ctx.lineTo(342.3,41.5);ctx.lineTo(346.3,42.0);ctx.lineTo(350.3,42.4);ctx.lineTo(354.3,42.9);ctx.lineTo(358.3,43.3);ctx.lineTo(362.4,43.8);ctx.lineTo(366.4,44.3);ctx.lineTo(370.5,44.7);ctx.lineTo(374.6,45.2);ctx.lineTo(378.7,45.7);ctx.lineTo(382.8,46.1);ctx.lineTo(386.9,46.6);ctx.lineTo(391.1,47.1);ctx.lineTo(395.3,47.6);ctx.lineTo(399.4,48.1);ctx.lineTo(403.6,48.5);ctx.lineTo(407.7,49.0);ctx.lineTo(411.8,49.5);ctx.lineTo(415.9,50.0);ctx.lineTo(420.0,50.4);ctx.lineTo(424.0,50.9);ctx.lineTo(428.1,51.4);ctx.lineTo(432.1,51.8);ctx.lineTo(436.1,52.3);ctx.lineTo(440.1,52.7);ctx.lineTo(444.1,53.2);ctx.lineTo(448.1,53.6);ctx.lineTo(452.0,54.1);ctx.lineTo(456.0,54.6);ctx.lineTo(460.4,55.1);ctx.lineTo(464.8,55.6);ctx.lineTo(469.2,56.1);ctx.lineTo(473.6,56.6);ctx.lineTo(477.9,57.1);ctx.lineTo(482.3,57.6);ctx.lineTo(486.5,58.1);ctx.lineTo(490.8,58.5);ctx.lineTo(494.9,59.0);ctx.lineTo(499.5,59.6);ctx.lineTo(504.1,60.1);ctx.lineTo(508.6,60.6);ctx.lineTo(513.0,61.1);ctx.lineTo(517.4,61.6);ctx.lineTo(521.7,62.1);ctx.lineTo(525.9,62.6);ctx.lineTo(530.1,63.0);ctx.lineTo(534.8,63.6);ctx.lineTo(539.4,64.1);ctx.lineTo(544.0,64.6);ctx.lineTo(548.4,65.1);ctx.lineTo(552.8,65.6);ctx.lineTo(557.1,66.1);ctx.lineTo(561.3,66.6);ctx.lineTo(566.0,67.2);ctx.lineTo(570.6,67.7);ctx.lineTo(575.1,68.2);ctx.lineTo(579.5,68.7);ctx.lineTo(583.7,69.2);ctx.lineTo(587.8,69.7);ctx.lineTo(592.6,70.2);ctx.lineTo(597.2,70.8);ctx.lineTo(601.7,71.3);ctx.lineTo(606.0,71.8);ctx.lineTo(610.1,72.2);ctx.lineTo(614.8,72.8);ctx.lineTo(619.0,73.2);ctx.lineTo(623.4,73.8);ctx.lineTo(628.8,74.4);ctx.lineTo(632.6,74.8);ctx.lineTo(636.9,75.3);ctx.lineTo(641.4,75.8);ctx.lineTo(646.1,76.4);ctx.lineTo(650.7,76.9);ctx.lineTo(655.0,77.4);ctx.lineTo(658.8,77.8);ctx.lineTo(664.7,78.5);ctx.lineTo(669.8,79.1);ctx.lineTo(674.4,79.6);ctx.lineTo(678.5,80.1);ctx.lineTo(685.0,80.8);ctx.lineTo(690.2,81.4);ctx.lineTo(695.9,82.1);ctx.lineTo(700.5,82.6);ctx.lineTo(704.4,83.1);ctx.closePath();ctx.clip();ctx.drawImage(off,0,0);})();</script>
<svg class="a" style="left:-1.5px;top:-1.5px" width="679" height="523">
<rect x="214.6" y="106.8" width="15" height="15" fill="none" stroke="#000" stroke-width="2"/>
<rect x="132.9" y="24.5" width="15" height="15" fill="none" stroke="#fff" stroke-width="2"/>
<rect x="158.5" y="50.0" width="15" height="15" fill="none" stroke="#fff" stroke-width="2"/>
<rect x="200.5" y="42.1" width="15" height="15" fill="none" stroke="#fff" stroke-width="2"/>
<rect x="222.2" y="32.6" width="15" height="15" fill="none" stroke="#fff" stroke-width="2"/>
<rect x="251.1" y="37.4" width="15" height="15" fill="none" stroke="#fff" stroke-width="2"/>
<rect x="284.2" y="44.4" width="15" height="15" fill="none" stroke="#fff" stroke-width="2"/>
<rect x="330.3" y="47.8" width="15" height="15" fill="none" stroke="#fff" stroke-width="2"/>
<rect x="330.3" y="52.5" width="15" height="15" fill="none" stroke="#fff" stroke-width="2"/>
<rect x="197.6" y="65.2" width="15" height="15" fill="none" stroke="#fff" stroke-width="2"/>
<rect x="166.2" y="98.3" width="15" height="15" fill="none" stroke="#fff" stroke-width="2"/>
<rect x="148.8" y="118.1" width="15" height="15" fill="none" stroke="#fff" stroke-width="2"/>
<rect x="154.5" y="151.2" width="15" height="15" fill="none" stroke="#fff" stroke-width="2"/>
<rect x="190.6" y="148.4" width="15" height="15" fill="none" stroke="#fff" stroke-width="2"/>
<rect x="212.2" y="154.2" width="15" height="15" fill="none" stroke="#fff" stroke-width="2"/>
<rect x="249.6" y="173.2" width="15" height="15" fill="none" stroke="#fff" stroke-width="2"/>
<rect x="193.5" y="204.3" width="15" height="15" fill="none" stroke="#fff" stroke-width="2"/>
<rect x="500.2" y="59.4" width="15" height="15" fill="none" stroke="#fff" stroke-width="2"/>
<rect x="415.1" y="80.2" width="15" height="15" fill="none" stroke="#fff" stroke-width="2"/>
<rect x="350.5" y="93.5" width="15" height="15" fill="none" stroke="#fff" stroke-width="2"/>
<rect x="315.7" y="142.6" width="15" height="15" fill="none" stroke="#fff" stroke-width="2"/>
<rect x="336.5" y="225.8" width="15" height="15" fill="none" stroke="#fff" stroke-width="2"/>
<rect x="193.5" y="258.7" width="15" height="15" fill="none" stroke="#fff" stroke-width="2"/>
<rect x="190.9" y="376.4" width="15" height="15" fill="none" stroke="#fff" stroke-width="2"/>
<rect x="256.2" y="73.3" width="15" height="15" fill="none" stroke="#fff" stroke-width="2"/>
<rect x="261.9" y="86.5" width="15" height="15" fill="none" stroke="#fff" stroke-width="2"/>
<rect x="268.5" y="80.9" width="15" height="15" fill="none" stroke="#fff" stroke-width="2"/>
<rect x="277.0" y="65.7" width="15" height="15" fill="none" stroke="#fff" stroke-width="2"/>
<rect x="277.0" y="77.1" width="15" height="15" fill="none" stroke="#fff" stroke-width="2"/>
<rect x="289.3" y="75.2" width="15" height="15" fill="none" stroke="#fff" stroke-width="2"/>
<rect x="303.5" y="57.2" width="15" height="15" fill="none" stroke="#fff" stroke-width="2"/>
<rect x="303.5" y="65.7" width="15" height="15" fill="none" stroke="#fff" stroke-width="2"/>
<rect x="303.5" y="74.3" width="15" height="15" fill="none" stroke="#fff" stroke-width="2"/>
<rect x="310.1" y="63.9" width="15" height="15" fill="none" stroke="#fff" stroke-width="2"/>
<rect x="297.8" y="66.7" width="15" height="15" fill="none" stroke="#fff" stroke-width="2"/>
<rect x="282.5" y="62.9" width="15" height="15" fill="none" stroke="#fff" stroke-width="2"/>
<rect x="294.0" y="55.3" width="15" height="15" fill="none" stroke="#fff" stroke-width="2"/>
<circle cx="219.0" cy="122.5" r="4.6" fill="#888" stroke="#111" stroke-width="1.4"/>
<circle cx="218.3" cy="120.5" r="4.6" fill="#999" stroke="#111" stroke-width="1.4"/>
<circle cx="218.0" cy="119.0" r="4.6" fill="#aaa" stroke="#111" stroke-width="1.4"/>
<circle cx="140.4" cy="29.2" r="4.6" fill="#00ff00" stroke="#111" stroke-width="1.4"/>
<circle cx="165.0" cy="56.6" r="4.6" fill="#3f7a42" stroke="#111" stroke-width="1.4"/>
<circle cx="201.0" cy="46.4" r="4.6" fill="#a0b048" stroke="#111" stroke-width="1.4"/>
<circle cx="219.7" cy="37.7" r="4.6" fill="#ffff00" stroke="#111" stroke-width="1.4"/>
<circle cx="247.1" cy="42.0" r="4.6" fill="#e0c030" stroke="#111" stroke-width="1.4"/>
<circle cx="277.3" cy="49.2" r="4.6" fill="#e0a030" stroke="#111" stroke-width="1.4"/>
<circle cx="320.5" cy="54.3" r="4.6" fill="#c06a30" stroke="#111" stroke-width="1.4"/>
<circle cx="323.3" cy="56.2" r="4.6" fill="#b06030" stroke="#111" stroke-width="1.4"/>
<circle cx="199.4" cy="72.3" r="4.6" fill="#5a6440" stroke="#111" stroke-width="1.4"/>
<circle cx="175.2" cy="111.1" r="4.6" fill="#60b0a0" stroke="#111" stroke-width="1.4"/>
<circle cx="160.3" cy="134.7" r="4.6" fill="#00ffff" stroke="#111" stroke-width="1.4"/>
<circle cx="166.3" cy="167.8" r="4.6" fill="#0888a0" stroke="#111" stroke-width="1.4"/>
<circle cx="199.1" cy="164.5" r="4.6" fill="#6080a0" stroke="#111" stroke-width="1.4"/>
<circle cx="219.5" cy="171.7" r="4.6" fill="#8888b0" stroke="#111" stroke-width="1.4"/>
<circle cx="210.8" cy="175.8" r="4.6" fill="#000" stroke="#111" stroke-width="1.4"/>
<circle cx="343.6" cy="108.5" r="4.6" fill="#c05868" stroke="#111" stroke-width="1.4"/>
<circle cx="314.9" cy="164.5" r="4.6" fill="#b85898" stroke="#111" stroke-width="1.4"/>
<circle cx="244.1" cy="203.8" r="4.6" fill="#603c70" stroke="#111" stroke-width="1.4"/>
<circle cx="204.8" cy="226.5" r="4.6" fill="#5060a0" stroke="#111" stroke-width="1.4"/>
<circle cx="339.0" cy="267.4" r="4.6" fill="#ff00ff" stroke="#111" stroke-width="1.4"/>
<circle cx="207.8" cy="290.0" r="4.6" fill="#404898" stroke="#111" stroke-width="1.4"/>
<circle cx="213.9" cy="417.5" r="4.6" fill="#0000ff" stroke="#111" stroke-width="1.4"/>
<circle cx="420.4" cy="94.1" r="4.6" fill="#a03840" stroke="#111" stroke-width="1.4"/>
<circle cx="506.6" cy="67.7" r="4.6" fill="#ff0000" stroke="#111" stroke-width="1.4"/>
<circle cx="253.0" cy="88.4" r="4.6" fill="#f0c0a0" stroke="#111" stroke-width="1.4"/>
<circle cx="251.8" cy="98.4" r="4.6" fill="#f8d0b0" stroke="#111" stroke-width="1.4"/>
<circle cx="265.6" cy="89.7" r="4.6" fill="#804830" stroke="#111" stroke-width="1.4"/>
<circle cx="264.7" cy="84.6" r="4.6" fill="#d09070" stroke="#111" stroke-width="1.4"/>
<circle cx="271.3" cy="74.6" r="4.6" fill="#d09070" stroke="#111" stroke-width="1.4"/>
<circle cx="270.3" cy="82.3" r="4.6" fill="#d09070" stroke="#111" stroke-width="1.4"/>
<circle cx="280.4" cy="83.6" r="4.6" fill="#d09070" stroke="#111" stroke-width="1.4"/>
<circle cx="287.4" cy="64.7" r="4.6" fill="#7a4a30" stroke="#111" stroke-width="1.4"/>
<circle cx="286.0" cy="75.1" r="4.6" fill="#d09070" stroke="#111" stroke-width="1.4"/>
<circle cx="294.0" cy="81.8" r="4.6" fill="#e09070" stroke="#111" stroke-width="1.4"/>
<circle cx="293.0" cy="76.1" r="4.6" fill="#d09070" stroke="#111" stroke-width="1.4"/>
<circle cx="299.3" cy="63.4" r="4.6" fill="#6a4028" stroke="#111" stroke-width="1.4"/>
<circle cx="309.5" cy="68.1" r="4.6" fill="#5a3a28" stroke="#111" stroke-width="1.4"/>
</svg>
</div>
<div class="a" style="left:1224px;top:673.95px;width:6px;height:1.5px;background:#aaa"></div>
<div class="t" style="left:1170px;top:666.7px;width:53px;text-align:right;font-size:15px;color:#ccc">0</div>
<div class="a" style="left:1224px;top:630.55px;width:6px;height:1.5px;background:#aaa"></div>
<div class="t" style="left:1170px;top:623.3px;width:53px;text-align:right;font-size:15px;color:#ccc">0.05</div>
<div class="a" style="left:1224px;top:587.15px;width:6px;height:1.5px;background:#aaa"></div>
<div class="t" style="left:1170px;top:579.9px;width:53px;text-align:right;font-size:15px;color:#ccc">0.1</div>
<div class="a" style="left:1224px;top:543.75px;width:6px;height:1.5px;background:#aaa"></div>
<div class="t" style="left:1170px;top:536.5px;width:53px;text-align:right;font-size:15px;color:#ccc">0.15</div>
<div class="a" style="left:1224px;top:500.35px;width:6px;height:1.5px;background:#aaa"></div>
<div class="t" style="left:1170px;top:493.1px;width:53px;text-align:right;font-size:15px;color:#ccc">0.2</div>
<div class="a" style="left:1224px;top:456.95px;width:6px;height:1.5px;background:#aaa"></div>
<div class="t" style="left:1170px;top:449.7px;width:53px;text-align:right;font-size:15px;color:#ccc">0.25</div>
<div class="a" style="left:1224px;top:413.55px;width:6px;height:1.5px;background:#aaa"></div>
<div class="t" style="left:1170px;top:406.3px;width:53px;text-align:right;font-size:15px;color:#ccc">0.3</div>
<div class="a" style="left:1224px;top:370.15px;width:6px;height:1.5px;background:#aaa"></div>
<div class="t" style="left:1170px;top:362.9px;width:53px;text-align:right;font-size:15px;color:#ccc">0.35</div>
<div class="a" style="left:1224px;top:326.75px;width:6px;height:1.5px;background:#aaa"></div>
<div class="t" style="left:1170px;top:319.5px;width:53px;text-align:right;font-size:15px;color:#ccc">0.4</div>
<div class="a" style="left:1224px;top:283.35px;width:6px;height:1.5px;background:#aaa"></div>
<div class="t" style="left:1170px;top:276.1px;width:53px;text-align:right;font-size:15px;color:#ccc">0.45</div>
<div class="a" style="left:1224px;top:239.95px;width:6px;height:1.5px;background:#aaa"></div>
<div class="t" style="left:1170px;top:232.7px;width:53px;text-align:right;font-size:15px;color:#ccc">0.5</div>
<div class="a" style="left:1224px;top:196.55px;width:6px;height:1.5px;background:#aaa"></div>
<div class="t" style="left:1170px;top:189.3px;width:53px;text-align:right;font-size:15px;color:#ccc">0.55</div>
<div class="a" style="left:1229.25px;top:675px;width:1.5px;height:6px;background:#aaa"></div>
<div class="t" style="left:1205.0px;top:684px;width:50px;text-align:center;font-size:15px;color:#ccc">0</div>
<div class="a" style="left:1285.75px;top:675px;width:1.5px;height:6px;background:#aaa"></div>
<div class="t" style="left:1261.5px;top:684px;width:50px;text-align:center;font-size:15px;color:#ccc">0.05</div>
<div class="a" style="left:1342.25px;top:675px;width:1.5px;height:6px;background:#aaa"></div>
<div class="t" style="left:1318.0px;top:684px;width:50px;text-align:center;font-size:15px;color:#ccc">0.1</div>
<div class="a" style="left:1398.75px;top:675px;width:1.5px;height:6px;background:#aaa"></div>
<div class="t" style="left:1374.5px;top:684px;width:50px;text-align:center;font-size:15px;color:#ccc">0.15</div>
<div class="a" style="left:1455.25px;top:675px;width:1.5px;height:6px;background:#aaa"></div>
<div class="t" style="left:1431.0px;top:684px;width:50px;text-align:center;font-size:15px;color:#ccc">0.2</div>
<div class="a" style="left:1511.75px;top:675px;width:1.5px;height:6px;background:#aaa"></div>
<div class="t" style="left:1487.5px;top:684px;width:50px;text-align:center;font-size:15px;color:#ccc">0.25</div>
<div class="a" style="left:1568.25px;top:675px;width:1.5px;height:6px;background:#aaa"></div>
<div class="t" style="left:1544.0px;top:684px;width:50px;text-align:center;font-size:15px;color:#ccc">0.3</div>
<div class="a" style="left:1624.75px;top:675px;width:1.5px;height:6px;background:#aaa"></div>
<div class="t" style="left:1600.5px;top:684px;width:50px;text-align:center;font-size:15px;color:#ccc">0.35</div>
<div class="a" style="left:1681.25px;top:675px;width:1.5px;height:6px;background:#aaa"></div>
<div class="t" style="left:1657.0px;top:684px;width:50px;text-align:center;font-size:15px;color:#ccc">0.4</div>
<div class="a" style="left:1737.75px;top:675px;width:1.5px;height:6px;background:#aaa"></div>
<div class="t" style="left:1713.5px;top:684px;width:50px;text-align:center;font-size:15px;color:#ccc">0.45</div>
<div class="a" style="left:1794.25px;top:675px;width:1.5px;height:6px;background:#aaa"></div>
<div class="t" style="left:1770.0px;top:684px;width:50px;text-align:center;font-size:15px;color:#ccc">0.5</div>
<div class="a" style="left:1850.75px;top:675px;width:1.5px;height:6px;background:#aaa"></div>
<div class="t" style="left:1826.5px;top:684px;width:50px;text-align:center;font-size:15px;color:#ccc">0.55</div>
<div class="a" style="left:1688px;top:488px;width:217px;height:145px;background:#2a2a2a"></div><div class="a" style="left:1691px;top:491px;width:211px;height:139px;border:2px solid #8a8a8a;background:linear-gradient(150deg,#ff8a2a,#ff6a28 50%,#ff4a22)"></div>
<svg class="a" style="left:1692px;top:493px" width="209" height="136">
<rect x="138.3" y="17.3" width="15" height="15" fill="none" stroke="#fff" stroke-width="2"/>
<rect x="189.9" y="18.8" width="15" height="15" fill="none" stroke="#fff" stroke-width="2"/>
<rect x="26.8" y="39.4" width="15" height="15" fill="none" stroke="#fff" stroke-width="2"/>
<rect x="96.2" y="59.3" width="15" height="15" fill="none" stroke="#fff" stroke-width="2"/>
<rect x="116.2" y="73.6" width="15" height="15" fill="none" stroke="#fff" stroke-width="2"/>
<rect x="188.4" y="57.9" width="15" height="15" fill="none" stroke="#fff" stroke-width="2"/>
<rect x="4.1" y="73.4" width="15" height="15" fill="none" stroke="#fff" stroke-width="2"/>
<rect x="10.7" y="82.5" width="15" height="15" fill="none" stroke="#fff" stroke-width="2"/>
<rect x="19.8" y="95.2" width="15" height="15" fill="none" stroke="#fff" stroke-width="2"/>
<rect x="100.5" y="100.1" width="15" height="15" fill="none" stroke="#fff" stroke-width="2"/>
<circle cx="96.7" cy="2.5" r="4.8" fill="#a06a40" stroke="#111" stroke-width="1.4"/>
<circle cx="165.7" cy="-0.1" r="4.8" fill="#a06a40" stroke="#111" stroke-width="1.4"/>
<circle cx="171.3" cy="45.2" r="4.8" fill="#5a3a28" stroke="#111" stroke-width="1.4"/>
<circle cx="28.6" cy="64.1" r="4.8" fill="#d08a60" stroke="#111" stroke-width="1.4"/>
<circle cx="47.5" cy="78.7" r="4.8" fill="#d08a60" stroke="#111" stroke-width="1.4"/>
<circle cx="21.0" cy="110.2" r="4.8" fill="#f0a080" stroke="#111" stroke-width="1.4"/>
</svg>
<div class="a" style="left:1637px;top:641px;width:268px;height:28px;background:#2a2a2a"></div>
<div class="t" style="left:1638px;top:642px;font-size:22px;color:#f4f4f4;transform:scaleX(0.955);transform-origin:0 0" id="rgbt">RGB Triplet: 217, 140, 94</div>
<div class="t" style="left:203px;top:722px;font-size:31.3px;color:#f2f2f2" id="avg">Avg dE2000: 3.39</div>
<div class="t" style="left:207px;top:764px;font-size:32px;color:#f2f2f2" id="max">Max dE2000: 7.3</div>
<div class="t" style="left:164px;top:815px;font-size:32.2px;color:#f2f2f2" id="cur">Current Reading</div>
<div class="t" style="left:164px;top:855px;font-size:27px;color:#f2f2f2" id="xr">x: 0.4294</div>
<div class="t" style="left:332px;top:855px;font-size:27px;color:#f2f2f2" id="yr">y: 0.3849</div>
<div class="t" style="left:164px;top:900px;font-size:26.8px;color:#f2f2f2" id="fl">fL: 47.07</div>
<div class="t" style="left:164px;top:935px;font-size:27.5px;color:#f2f2f2" id="cd">cd/m&sup2;: 161.27</div>
<div class="a" style="left:491px;top:728px;width:1429px;height:226px;background:#333"></div>
<div class="a" style="left:491px;top:728px;width:10px;height:224px;background:#262626"></div>
<div class="a" style="left:491px;top:728px;width:10px;height:27px;background:#000"></div>
<div class="a" style="left:501px;top:728px;width:1419px;height:27px;background:linear-gradient(#343434,#2c2c2c 50%,#181818 50%,#111)"></div>
<div class="a" style="left:501px;top:755px;width:1418px;height:24.5px;background:#3c3c3c"></div>
<div class="a" style="left:501px;top:780px;width:1418px;height:24.5px;background:#757575"></div>
<div class="a" style="left:501px;top:804.5px;width:1418px;height:24.5px;background:#3c3c3c"></div>
<div class="a" style="left:501px;top:829px;width:1418px;height:24.5px;background:#757575"></div>
<div class="a" style="left:501px;top:853.5px;width:1418px;height:24.5px;background:#3c3c3c"></div>
<div class="a" style="left:501px;top:878px;width:1418px;height:24.5px;background:#757575"></div>
<div class="a" style="left:501px;top:902.5px;width:1418px;height:24.5px;background:#3c3c3c"></div>
<div class="a" style="left:501px;top:927px;width:1418px;height:24.5px;background:#757575"></div>
<div class="a" style="left:501px;top:728px;width:1418px;height:226px;overflow:hidden">
<div class="t" style="left:84.6px;top:5.5px;font-size:15.8px;transform:scaleX(0.715);transform-origin:0 0;color:#f0f0f0">White</div>
<div class="t" style="left:127.1px;top:5.5px;font-size:15.8px;transform:scaleX(0.715);transform-origin:0 0;color:#f0f0f0">Gray 80</div>
<div class="t" style="left:170.9px;top:5.5px;font-size:15.8px;transform:scaleX(0.715);transform-origin:0 0;color:#f0f0f0">Gray 65</div>
<div class="t" style="left:214.8px;top:5.5px;font-size:15.8px;transform:scaleX(0.715);transform-origin:0 0;color:#f0f0f0">Gray 50</div>
<div class="t" style="left:258.6px;top:5.5px;font-size:15.8px;transform:scaleX(0.715);transform-origin:0 0;color:#f0f0f0">Gray 35</div>
<div class="t" style="left:302.4px;top:5.5px;font-size:15.8px;transform:scaleX(0.715);transform-origin:0 0;color:#f0f0f0">Black</div>
<div class="t" style="left:338.3px;top:5.5px;font-size:15.8px;transform:scaleX(0.715);transform-origin:0 0;color:#f0f0f0">Dark Skin</div>
<div class="t" style="left:390.0px;top:5.5px;font-size:15.8px;transform:scaleX(0.715);transform-origin:0 0;color:#f0f0f0">Light Skin</div>
<div class="t" style="left:443.2px;top:5.5px;font-size:15.8px;transform:scaleX(0.715);transform-origin:0 0;color:#f0f0f0">Blue Sky</div>
<div class="t" style="left:490.3px;top:5.5px;font-size:15.8px;transform:scaleX(0.715);transform-origin:0 0;color:#f0f0f0">Foliage</div>
<div class="t" style="left:531.5px;top:5.5px;font-size:15.8px;transform:scaleX(0.715);transform-origin:0 0;color:#f0f0f0">Blue Flower</div>
<div class="t" style="left:595.2px;top:5.5px;font-size:15.8px;transform:scaleX(0.715);transform-origin:0 0;color:#f0f0f0">Bluish Green</div>
<div class="t" style="left:663.8px;top:5.5px;font-size:15.8px;transform:scaleX(0.715);transform-origin:0 0;color:#f0f0f0">Orange</div>
<div class="t" style="left:706.3px;top:5.5px;font-size:15.8px;transform:scaleX(0.715);transform-origin:0 0;color:#f0f0f0">Purplish Blue</div>
<div class="t" style="left:777.2px;top:5.5px;font-size:15.8px;transform:scaleX(0.715);transform-origin:0 0;color:#f0f0f0">Moderate Red</div>
<div class="t" style="left:853.4px;top:5.5px;font-size:15.8px;transform:scaleX(0.715);transform-origin:0 0;color:#f0f0f0">Purple</div>
<div class="t" style="left:891.4px;top:5.5px;font-size:15.8px;transform:scaleX(0.715);transform-origin:0 0;color:#f0f0f0">Yellow Green</div>
<div class="t" style="left:961.8px;top:5.5px;font-size:15.8px;transform:scaleX(0.715);transform-origin:0 0;color:#f0f0f0">Orange Yellow</div>
<div class="t" style="left:1038.7px;top:5.5px;font-size:15.8px;transform:scaleX(0.715);transform-origin:0 0;color:#f0f0f0">Blue</div>
<div class="t" style="left:1074.3px;top:5.5px;font-size:15.8px;transform:scaleX(0.715);transform-origin:0 0;color:#f0f0f0">Green</div>
<div class="t" style="left:1116.6px;top:5.5px;font-size:15.8px;transform:scaleX(0.715);transform-origin:0 0;color:#f0f0f0">Red</div>
<div class="t" style="left:1152.4px;top:5.5px;font-size:15.8px;transform:scaleX(0.715);transform-origin:0 0;color:#f0f0f0">Yellow</div>
<div class="t" style="left:1194.7px;top:5.5px;font-size:15.8px;transform:scaleX(0.715);transform-origin:0 0;color:#f0f0f0">Magenta</div>
<div class="t" style="left:1244.6px;top:5.5px;font-size:15.8px;transform:scaleX(0.715);transform-origin:0 0;color:#f0f0f0">Cyan</div>
<div class="t" style="left:1280.7px;top:5.5px;font-size:15.8px;transform:scaleX(0.715);transform-origin:0 0;color:#f0f0f0">100% Red</div>
<div class="t" style="left:1335.2px;top:5.5px;font-size:15.8px;transform:scaleX(0.715);transform-origin:0 0;color:#f0f0f0">100% Green</div>
<div class="t" style="left:1401.0px;top:5.5px;font-size:15.8px;transform:scaleX(0.715);transform-origin:0 0;color:#f0f0f0">100% Blue</div>
<div class="t" style="left:3px;top:31.6px;font-size:15.8px;transform:scaleX(0.74);transform-origin:0 0;color:#f0f0f0">x: CIE31</div>
<div class="t" style="left:84.6px;top:31.6px;font-size:15.8px;transform:scaleX(0.74);transform-origin:0 0;color:#f0f0f0">0.30</div>
<div class="t" style="left:127.1px;top:31.6px;font-size:15.8px;transform:scaleX(0.74);transform-origin:0 0;color:#f0f0f0">0.30</div>
<div class="t" style="left:170.9px;top:31.6px;font-size:15.8px;transform:scaleX(0.74);transform-origin:0 0;color:#f0f0f0">0.30</div>
<div class="t" style="left:214.8px;top:31.6px;font-size:15.8px;transform:scaleX(0.74);transform-origin:0 0;color:#f0f0f0">0.30</div>
<div class="t" style="left:258.6px;top:31.6px;font-size:15.8px;transform:scaleX(0.74);transform-origin:0 0;color:#f0f0f0">0.30</div>
<div class="t" style="left:302.4px;top:31.6px;font-size:15.8px;transform:scaleX(0.74);transform-origin:0 0;color:#f0f0f0">0.25</div>
<div class="t" style="left:338.3px;top:31.6px;font-size:15.8px;transform:scaleX(0.74);transform-origin:0 0;color:#f0f0f0">0.39</div>
<div class="t" style="left:390.0px;top:31.6px;font-size:15.8px;transform:scaleX(0.74);transform-origin:0 0;color:#f0f0f0">0.36</div>
<div class="t" style="left:443.2px;top:31.6px;font-size:15.8px;transform:scaleX(0.74);transform-origin:0 0;color:#f0f0f0">0.24</div>
<div class="t" style="left:490.3px;top:31.6px;font-size:15.8px;transform:scaleX(0.74);transform-origin:0 0;color:#f0f0f0">0.33</div>
<div class="t" style="left:531.5px;top:31.6px;font-size:15.8px;transform:scaleX(0.74);transform-origin:0 0;color:#f0f0f0">0.26</div>
<div class="t" style="left:595.2px;top:31.6px;font-size:15.8px;transform:scaleX(0.74);transform-origin:0 0;color:#f0f0f0">0.26</div>
<div class="t" style="left:663.8px;top:31.6px;font-size:15.8px;transform:scaleX(0.74);transform-origin:0 0;color:#f0f0f0">0.50</div>
<div class="t" style="left:706.3px;top:31.6px;font-size:15.8px;transform:scaleX(0.74);transform-origin:0 0;color:#f0f0f0">0.21</div>
<div class="t" style="left:777.2px;top:31.6px;font-size:15.8px;transform:scaleX(0.74);transform-origin:0 0;color:#f0f0f0">0.44</div>
<div class="t" style="left:853.4px;top:31.6px;font-size:15.8px;transform:scaleX(0.74);transform-origin:0 0;color:#f0f0f0">0.26</div>
<div class="t" style="left:891.4px;top:31.6px;font-size:15.8px;transform:scaleX(0.74);transform-origin:0 0;color:#f0f0f0">0.37</div>
<div class="t" style="left:961.8px;top:31.6px;font-size:15.8px;transform:scaleX(0.74);transform-origin:0 0;color:#f0f0f0">0.46</div>
<div class="t" style="left:1038.7px;top:31.6px;font-size:15.8px;transform:scaleX(0.74);transform-origin:0 0;color:#f0f0f0">0.19</div>
<div class="t" style="left:1074.3px;top:31.6px;font-size:15.8px;transform:scaleX(0.74);transform-origin:0 0;color:#f0f0f0">0.30</div>
<div class="t" style="left:1116.6px;top:31.6px;font-size:15.8px;transform:scaleX(0.74);transform-origin:0 0;color:#f0f0f0">0.53</div>
<div class="t" style="left:1152.4px;top:31.6px;font-size:15.8px;transform:scaleX(0.74);transform-origin:0 0;color:#f0f0f0">0.44</div>
<div class="t" style="left:1194.7px;top:31.6px;font-size:15.8px;transform:scaleX(0.74);transform-origin:0 0;color:#f0f0f0">0.35</div>
<div class="t" style="left:1244.6px;top:31.6px;font-size:15.8px;transform:scaleX(0.74);transform-origin:0 0;color:#f0f0f0">0.21</div>
<div class="t" style="left:1280.7px;top:31.6px;font-size:15.8px;transform:scaleX(0.74);transform-origin:0 0;color:#f0f0f0">0.64</div>
<div class="t" style="left:1335.2px;top:31.6px;font-size:15.8px;transform:scaleX(0.74);transform-origin:0 0;color:#f0f0f0">0.30</div>
<div class="t" style="left:1401.0px;top:31.6px;font-size:15.8px;transform:scaleX(0.74);transform-origin:0 0;color:#f0f0f0">0.15</div>
<div class="t" style="left:3px;top:56.6px;font-size:15.8px;transform:scaleX(0.74);transform-origin:0 0;color:#f0f0f0">y: CIE31</div>
<div class="t" style="left:84.6px;top:56.6px;font-size:15.8px;transform:scaleX(0.74);transform-origin:0 0;color:#f0f0f0">0.31</div>
<div class="t" style="left:127.1px;top:56.6px;font-size:15.8px;transform:scaleX(0.74);transform-origin:0 0;color:#f0f0f0">0.32</div>
<div class="t" style="left:170.9px;top:56.6px;font-size:15.8px;transform:scaleX(0.74);transform-origin:0 0;color:#f0f0f0">0.32</div>
<div class="t" style="left:214.8px;top:56.6px;font-size:15.8px;transform:scaleX(0.74);transform-origin:0 0;color:#f0f0f0">0.32</div>
<div class="t" style="left:258.6px;top:56.6px;font-size:15.8px;transform:scaleX(0.74);transform-origin:0 0;color:#f0f0f0">0.32</div>
<div class="t" style="left:302.4px;top:56.6px;font-size:15.8px;transform:scaleX(0.74);transform-origin:0 0;color:#f0f0f0">0.23</div>
<div class="t" style="left:338.3px;top:56.6px;font-size:15.8px;transform:scaleX(0.74);transform-origin:0 0;color:#f0f0f0">0.36</div>
<div class="t" style="left:390.0px;top:56.6px;font-size:15.8px;transform:scaleX(0.74);transform-origin:0 0;color:#f0f0f0">0.35</div>
<div class="t" style="left:443.2px;top:56.6px;font-size:15.8px;transform:scaleX(0.74);transform-origin:0 0;color:#f0f0f0">0.25</div>
<div class="t" style="left:490.3px;top:56.6px;font-size:15.8px;transform:scaleX(0.74);transform-origin:0 0;color:#f0f0f0">0.43</div>
<div class="t" style="left:531.5px;top:56.6px;font-size:15.8px;transform:scaleX(0.74);transform-origin:0 0;color:#f0f0f0">0.24</div>
<div class="t" style="left:595.2px;top:56.6px;font-size:15.8px;transform:scaleX(0.74);transform-origin:0 0;color:#f0f0f0">0.35</div>
<div class="t" style="left:663.8px;top:56.6px;font-size:15.8px;transform:scaleX(0.74);transform-origin:0 0;color:#f0f0f0">0.42</div>
<div class="t" style="left:706.3px;top:56.6px;font-size:15.8px;transform:scaleX(0.74);transform-origin:0 0;color:#f0f0f0">0.18</div>
<div class="t" style="left:777.2px;top:56.6px;font-size:15.8px;transform:scaleX(0.74);transform-origin:0 0;color:#f0f0f0">0.30</div>
<div class="t" style="left:853.4px;top:56.6px;font-size:15.8px;transform:scaleX(0.74);transform-origin:0 0;color:#f0f0f0">0.20</div>
<div class="t" style="left:891.4px;top:56.6px;font-size:15.8px;transform:scaleX(0.74);transform-origin:0 0;color:#f0f0f0">0.50</div>
<div class="t" style="left:961.8px;top:56.6px;font-size:15.8px;transform:scaleX(0.74);transform-origin:0 0;color:#f0f0f0">0.45</div>
<div class="t" style="left:1038.7px;top:56.6px;font-size:15.8px;transform:scaleX(0.74);transform-origin:0 0;color:#f0f0f0">0.12</div>
<div class="t" style="left:1074.3px;top:56.6px;font-size:15.8px;transform:scaleX(0.74);transform-origin:0 0;color:#f0f0f0">0.49</div>
<div class="t" style="left:1116.6px;top:56.6px;font-size:15.8px;transform:scaleX(0.74);transform-origin:0 0;color:#f0f0f0">0.31</div>
<div class="t" style="left:1152.4px;top:56.6px;font-size:15.8px;transform:scaleX(0.74);transform-origin:0 0;color:#f0f0f0">0.49</div>
<div class="t" style="left:1194.7px;top:56.6px;font-size:15.8px;transform:scaleX(0.74);transform-origin:0 0;color:#f0f0f0">0.23</div>
<div class="t" style="left:1244.6px;top:56.6px;font-size:15.8px;transform:scaleX(0.74);transform-origin:0 0;color:#f0f0f0">0.26</div>
<div class="t" style="left:1280.7px;top:56.6px;font-size:15.8px;transform:scaleX(0.74);transform-origin:0 0;color:#f0f0f0">0.33</div>
<div class="t" style="left:1335.2px;top:56.6px;font-size:15.8px;transform:scaleX(0.74);transform-origin:0 0;color:#f0f0f0">0.61</div>
<div class="t" style="left:1401.0px;top:56.6px;font-size:15.8px;transform:scaleX(0.74);transform-origin:0 0;color:#f0f0f0">0.05</div>
<div class="t" style="left:3px;top:81.1px;font-size:15.8px;transform:scaleX(0.74);transform-origin:0 0;color:#f0f0f0">Y</div>
<div class="t" style="left:84.6px;top:81.1px;font-size:15.8px;transform:scaleX(0.74);transform-origin:0 0;color:#f0f0f0">457.12</div>
<div class="t" style="left:127.1px;top:81.1px;font-size:15.8px;transform:scaleX(0.74);transform-origin:0 0;color:#f0f0f0">369.23</div>
<div class="t" style="left:170.9px;top:81.1px;font-size:15.8px;transform:scaleX(0.74);transform-origin:0 0;color:#f0f0f0">297.58</div>
<div class="t" style="left:214.8px;top:81.1px;font-size:15.8px;transform:scaleX(0.74);transform-origin:0 0;color:#f0f0f0">231.62</div>
<div class="t" style="left:258.6px;top:81.1px;font-size:15.8px;transform:scaleX(0.74);transform-origin:0 0;color:#f0f0f0">163.36</div>
<div class="t" style="left:302.4px;top:81.1px;font-size:15.8px;transform:scaleX(0.74);transform-origin:0 0;color:#f0f0f0">0.33</div>
<div class="t" style="left:338.3px;top:81.1px;font-size:15.8px;transform:scaleX(0.74);transform-origin:0 0;color:#f0f0f0">47.76</div>
<div class="t" style="left:390.0px;top:81.1px;font-size:15.8px;transform:scaleX(0.74);transform-origin:0 0;color:#f0f0f0">164.86</div>
<div class="t" style="left:443.2px;top:81.1px;font-size:15.8px;transform:scaleX(0.74);transform-origin:0 0;color:#f0f0f0">90.03</div>
<div class="t" style="left:490.3px;top:81.1px;font-size:15.8px;transform:scaleX(0.74);transform-origin:0 0;color:#f0f0f0">64.03</div>
<div class="a" style="left:528.5px;top:76.5px;width:63px;height:24.5px;background:#f4f4f4"></div>
<div class="t" style="left:531.5px;top:81.1px;font-size:15.8px;transform:scaleX(0.74);transform-origin:0 0;color:#f0f0f0;color:#111">110.76</div>
<div class="t" style="left:595.2px;top:81.1px;font-size:15.8px;transform:scaleX(0.74);transform-origin:0 0;color:#f0f0f0">201.40</div>
<div class="t" style="left:663.8px;top:81.1px;font-size:15.8px;transform:scaleX(0.74);transform-origin:0 0;color:#f0f0f0">131.73</div>
<div class="t" style="left:706.3px;top:81.1px;font-size:15.8px;transform:scaleX(0.74);transform-origin:0 0;color:#f0f0f0">55.14</div>
<div class="t" style="left:777.2px;top:81.1px;font-size:15.8px;transform:scaleX(0.74);transform-origin:0 0;color:#f0f0f0">84.46</div>
<div class="t" style="left:853.4px;top:81.1px;font-size:15.8px;transform:scaleX(0.74);transform-origin:0 0;color:#f0f0f0">27.97</div>
<div class="t" style="left:891.4px;top:81.1px;font-size:15.8px;transform:scaleX(0.74);transform-origin:0 0;color:#f0f0f0">205.87</div>
<div class="t" style="left:961.8px;top:81.1px;font-size:15.8px;transform:scaleX(0.74);transform-origin:0 0;color:#f0f0f0">199.73</div>
<div class="t" style="left:1038.7px;top:81.1px;font-size:15.8px;transform:scaleX(0.74);transform-origin:0 0;color:#f0f0f0">27.11</div>
<div class="t" style="left:1074.3px;top:81.1px;font-size:15.8px;transform:scaleX(0.74);transform-origin:0 0;color:#f0f0f0">113.30</div>
<div class="t" style="left:1116.6px;top:81.1px;font-size:15.8px;transform:scaleX(0.74);transform-origin:0 0;color:#f0f0f0">50.06</div>
<div class="t" style="left:1152.4px;top:81.1px;font-size:15.8px;transform:scaleX(0.74);transform-origin:0 0;color:#f0f0f0">276.76</div>
<div class="t" style="left:1194.7px;top:81.1px;font-size:15.8px;transform:scaleX(0.74);transform-origin:0 0;color:#f0f0f0">84.83</div>
<div class="t" style="left:1244.6px;top:81.1px;font-size:15.8px;transform:scaleX(0.74);transform-origin:0 0;color:#f0f0f0">93.20</div>
<div class="t" style="left:1280.7px;top:81.1px;font-size:15.8px;transform:scaleX(0.74);transform-origin:0 0;color:#f0f0f0">88.79</div>
<div class="t" style="left:1335.2px;top:81.1px;font-size:15.8px;transform:scaleX(0.74);transform-origin:0 0;color:#f0f0f0">344.14</div>
<div class="t" style="left:1401.0px;top:81.1px;font-size:15.8px;transform:scaleX(0.74);transform-origin:0 0;color:#f0f0f0">27.51</div>
<div class="t" style="left:3px;top:105.6px;font-size:15.8px;transform:scaleX(0.74);transform-origin:0 0;color:#f0f0f0">Target x:CIE31</div>
<div class="t" style="left:84.6px;top:105.6px;font-size:15.8px;transform:scaleX(0.74);transform-origin:0 0;color:#f0f0f0">0.31</div>
<div class="t" style="left:127.1px;top:105.6px;font-size:15.8px;transform:scaleX(0.74);transform-origin:0 0;color:#f0f0f0">0.31</div>
<div class="t" style="left:170.9px;top:105.6px;font-size:15.8px;transform:scaleX(0.74);transform-origin:0 0;color:#f0f0f0">0.31</div>
<div class="t" style="left:214.8px;top:105.6px;font-size:15.8px;transform:scaleX(0.74);transform-origin:0 0;color:#f0f0f0">0.31</div>
<div class="t" style="left:258.6px;top:105.6px;font-size:15.8px;transform:scaleX(0.74);transform-origin:0 0;color:#f0f0f0">0.31</div>
<div class="t" style="left:302.4px;top:105.6px;font-size:15.8px;transform:scaleX(0.74);transform-origin:0 0;color:#f0f0f0">0.31</div>
<div class="t" style="left:338.3px;top:105.6px;font-size:15.8px;transform:scaleX(0.74);transform-origin:0 0;color:#f0f0f0">0.40</div>
<div class="t" style="left:390.0px;top:105.6px;font-size:15.8px;transform:scaleX(0.74);transform-origin:0 0;color:#f0f0f0">0.38</div>
<div class="t" style="left:443.2px;top:105.6px;font-size:15.8px;transform:scaleX(0.74);transform-origin:0 0;color:#f0f0f0">0.25</div>
<div class="t" style="left:490.3px;top:105.6px;font-size:15.8px;transform:scaleX(0.74);transform-origin:0 0;color:#f0f0f0">0.34</div>
<div class="t" style="left:531.5px;top:105.6px;font-size:15.8px;transform:scaleX(0.74);transform-origin:0 0;color:#f0f0f0">0.27</div>
<div class="t" style="left:595.2px;top:105.6px;font-size:15.8px;transform:scaleX(0.74);transform-origin:0 0;color:#f0f0f0">0.26</div>
<div class="t" style="left:663.8px;top:105.6px;font-size:15.8px;transform:scaleX(0.74);transform-origin:0 0;color:#f0f0f0">0.51</div>
<div class="t" style="left:706.3px;top:105.6px;font-size:15.8px;transform:scaleX(0.74);transform-origin:0 0;color:#f0f0f0">0.22</div>
<div class="t" style="left:777.2px;top:105.6px;font-size:15.8px;transform:scaleX(0.74);transform-origin:0 0;color:#f0f0f0">0.46</div>
<div class="t" style="left:853.4px;top:105.6px;font-size:15.8px;transform:scaleX(0.74);transform-origin:0 0;color:#f0f0f0">0.29</div>
<div class="t" style="left:891.4px;top:105.6px;font-size:15.8px;transform:scaleX(0.74);transform-origin:0 0;color:#f0f0f0">0.38</div>
<div class="t" style="left:961.8px;top:105.6px;font-size:15.8px;transform:scaleX(0.74);transform-origin:0 0;color:#f0f0f0">0.47</div>
<div class="t" style="left:1038.7px;top:105.6px;font-size:15.8px;transform:scaleX(0.74);transform-origin:0 0;color:#f0f0f0">0.19</div>
<div class="t" style="left:1074.3px;top:105.6px;font-size:15.8px;transform:scaleX(0.74);transform-origin:0 0;color:#f0f0f0">0.31</div>
<div class="t" style="left:1116.6px;top:105.6px;font-size:15.8px;transform:scaleX(0.74);transform-origin:0 0;color:#f0f0f0">0.54</div>
<div class="t" style="left:1152.4px;top:105.6px;font-size:15.8px;transform:scaleX(0.74);transform-origin:0 0;color:#f0f0f0">0.45</div>
<div class="t" style="left:1194.7px;top:105.6px;font-size:15.8px;transform:scaleX(0.74);transform-origin:0 0;color:#f0f0f0">0.37</div>
<div class="t" style="left:1244.6px;top:105.6px;font-size:15.8px;transform:scaleX(0.74);transform-origin:0 0;color:#f0f0f0">0.21</div>
<div class="t" style="left:1280.7px;top:105.6px;font-size:15.8px;transform:scaleX(0.74);transform-origin:0 0;color:#f0f0f0">0.64</div>
<div class="t" style="left:1335.2px;top:105.6px;font-size:15.8px;transform:scaleX(0.74);transform-origin:0 0;color:#f0f0f0">0.30</div>
<div class="t" style="left:1401.0px;top:105.6px;font-size:15.8px;transform:scaleX(0.74);transform-origin:0 0;color:#f0f0f0">0.15</div>
<div class="t" style="left:3px;top:130.1px;font-size:15.8px;transform:scaleX(0.74);transform-origin:0 0;color:#f0f0f0">Target y:CIE31</div>
<div class="t" style="left:84.6px;top:130.1px;font-size:15.8px;transform:scaleX(0.74);transform-origin:0 0;color:#f0f0f0">0.33</div>
<div class="t" style="left:127.1px;top:130.1px;font-size:15.8px;transform:scaleX(0.74);transform-origin:0 0;color:#f0f0f0">0.33</div>
<div class="t" style="left:170.9px;top:130.1px;font-size:15.8px;transform:scaleX(0.74);transform-origin:0 0;color:#f0f0f0">0.33</div>
<div class="t" style="left:214.8px;top:130.1px;font-size:15.8px;transform:scaleX(0.74);transform-origin:0 0;color:#f0f0f0">0.33</div>
<div class="t" style="left:258.6px;top:130.1px;font-size:15.8px;transform:scaleX(0.74);transform-origin:0 0;color:#f0f0f0">0.33</div>
<div class="t" style="left:302.4px;top:130.1px;font-size:15.8px;transform:scaleX(0.74);transform-origin:0 0;color:#f0f0f0">0.33</div>
<div class="t" style="left:338.3px;top:130.1px;font-size:15.8px;transform:scaleX(0.74);transform-origin:0 0;color:#f0f0f0">0.36</div>
<div class="t" style="left:390.0px;top:130.1px;font-size:15.8px;transform:scaleX(0.74);transform-origin:0 0;color:#f0f0f0">0.36</div>
<div class="t" style="left:443.2px;top:130.1px;font-size:15.8px;transform:scaleX(0.74);transform-origin:0 0;color:#f0f0f0">0.27</div>
<div class="t" style="left:490.3px;top:130.1px;font-size:15.8px;transform:scaleX(0.74);transform-origin:0 0;color:#f0f0f0">0.43</div>
<div class="t" style="left:531.5px;top:130.1px;font-size:15.8px;transform:scaleX(0.74);transform-origin:0 0;color:#f0f0f0">0.25</div>
<div class="t" style="left:595.2px;top:130.1px;font-size:15.8px;transform:scaleX(0.74);transform-origin:0 0;color:#f0f0f0">0.36</div>
<div class="t" style="left:663.8px;top:130.1px;font-size:15.8px;transform:scaleX(0.74);transform-origin:0 0;color:#f0f0f0">0.41</div>
<div class="t" style="left:706.3px;top:130.1px;font-size:15.8px;transform:scaleX(0.74);transform-origin:0 0;color:#f0f0f0">0.19</div>
<div class="t" style="left:777.2px;top:130.1px;font-size:15.8px;transform:scaleX(0.74);transform-origin:0 0;color:#f0f0f0">0.31</div>
<div class="t" style="left:853.4px;top:130.1px;font-size:15.8px;transform:scaleX(0.74);transform-origin:0 0;color:#f0f0f0">0.22</div>
<div class="t" style="left:891.4px;top:130.1px;font-size:15.8px;transform:scaleX(0.74);transform-origin:0 0;color:#f0f0f0">0.49</div>
<div class="t" style="left:961.8px;top:130.1px;font-size:15.8px;transform:scaleX(0.74);transform-origin:0 0;color:#f0f0f0">0.44</div>
<div class="t" style="left:1038.7px;top:130.1px;font-size:15.8px;transform:scaleX(0.74);transform-origin:0 0;color:#f0f0f0">0.14</div>
<div class="t" style="left:1074.3px;top:130.1px;font-size:15.8px;transform:scaleX(0.74);transform-origin:0 0;color:#f0f0f0">0.49</div>
<div class="t" style="left:1116.6px;top:130.1px;font-size:15.8px;transform:scaleX(0.74);transform-origin:0 0;color:#f0f0f0">0.32</div>
<div class="t" style="left:1152.4px;top:130.1px;font-size:15.8px;transform:scaleX(0.74);transform-origin:0 0;color:#f0f0f0">0.47</div>
<div class="t" style="left:1194.7px;top:130.1px;font-size:15.8px;transform:scaleX(0.74);transform-origin:0 0;color:#f0f0f0">0.25</div>
<div class="t" style="left:1244.6px;top:130.1px;font-size:15.8px;transform:scaleX(0.74);transform-origin:0 0;color:#f0f0f0">0.27</div>
<div class="t" style="left:1280.7px;top:130.1px;font-size:15.8px;transform:scaleX(0.74);transform-origin:0 0;color:#f0f0f0">0.33</div>
<div class="t" style="left:1335.2px;top:130.1px;font-size:15.8px;transform:scaleX(0.74);transform-origin:0 0;color:#f0f0f0">0.60</div>
<div class="t" style="left:1401.0px;top:130.1px;font-size:15.8px;transform:scaleX(0.74);transform-origin:0 0;color:#f0f0f0">0.06</div>
<div class="t" style="left:3px;top:154.6px;font-size:15.8px;transform:scaleX(0.74);transform-origin:0 0;color:#f0f0f0">Target Y</div>
<div class="t" style="left:84.6px;top:154.6px;font-size:15.8px;transform:scaleX(0.74);transform-origin:0 0;color:#f0f0f0">457.12</div>
<div class="t" style="left:127.1px;top:154.6px;font-size:15.8px;transform:scaleX(0.74);transform-origin:0 0;color:#f0f0f0">361.72</div>
<div class="t" style="left:170.9px;top:154.6px;font-size:15.8px;transform:scaleX(0.74);transform-origin:0 0;color:#f0f0f0">291.46</div>
<div class="t" style="left:214.8px;top:154.6px;font-size:15.8px;transform:scaleX(0.74);transform-origin:0 0;color:#f0f0f0">224.45</div>
<div class="t" style="left:258.6px;top:154.6px;font-size:15.8px;transform:scaleX(0.74);transform-origin:0 0;color:#f0f0f0">156.30</div>
<div class="t" style="left:302.4px;top:154.6px;font-size:15.8px;transform:scaleX(0.74);transform-origin:0 0;color:#f0f0f0">0.00</div>
<div class="t" style="left:338.3px;top:154.6px;font-size:15.8px;transform:scaleX(0.74);transform-origin:0 0;color:#f0f0f0">46.05</div>
<div class="t" style="left:390.0px;top:154.6px;font-size:15.8px;transform:scaleX(0.74);transform-origin:0 0;color:#f0f0f0">159.51</div>
<div class="t" style="left:443.2px;top:154.6px;font-size:15.8px;transform:scaleX(0.74);transform-origin:0 0;color:#f0f0f0">85.47</div>
<div class="t" style="left:490.3px;top:154.6px;font-size:15.8px;transform:scaleX(0.74);transform-origin:0 0;color:#f0f0f0">59.57</div>
<div class="t" style="left:531.5px;top:154.6px;font-size:15.8px;transform:scaleX(0.74);transform-origin:0 0;color:#f0f0f0">106.59</div>
<div class="t" style="left:595.2px;top:154.6px;font-size:15.8px;transform:scaleX(0.74);transform-origin:0 0;color:#f0f0f0">191.41</div>
<div class="t" style="left:663.8px;top:154.6px;font-size:15.8px;transform:scaleX(0.74);transform-origin:0 0;color:#f0f0f0">129.58</div>
<div class="t" style="left:706.3px;top:154.6px;font-size:15.8px;transform:scaleX(0.74);transform-origin:0 0;color:#f0f0f0">53.73</div>
<div class="t" style="left:777.2px;top:154.6px;font-size:15.8px;transform:scaleX(0.74);transform-origin:0 0;color:#f0f0f0">85.37</div>
<div class="t" style="left:853.4px;top:154.6px;font-size:15.8px;transform:scaleX(0.74);transform-origin:0 0;color:#f0f0f0">30.51</div>
<div class="t" style="left:891.4px;top:154.6px;font-size:15.8px;transform:scaleX(0.74);transform-origin:0 0;color:#f0f0f0">195.45</div>
<div class="t" style="left:961.8px;top:154.6px;font-size:15.8px;transform:scaleX(0.74);transform-origin:0 0;color:#f0f0f0">194.33</div>
<div class="t" style="left:1038.7px;top:154.6px;font-size:15.8px;transform:scaleX(0.74);transform-origin:0 0;color:#f0f0f0">28.54</div>
<div class="t" style="left:1074.3px;top:154.6px;font-size:15.8px;transform:scaleX(0.74);transform-origin:0 0;color:#f0f0f0">105.02</div>
<div class="t" style="left:1116.6px;top:154.6px;font-size:15.8px;transform:scaleX(0.74);transform-origin:0 0;color:#f0f0f0">53.31</div>
<div class="t" style="left:1152.4px;top:154.6px;font-size:15.8px;transform:scaleX(0.74);transform-origin:0 0;color:#f0f0f0">269.53</div>
<div class="t" style="left:1194.7px;top:154.6px;font-size:15.8px;transform:scaleX(0.74);transform-origin:0 0;color:#f0f0f0">86.06</div>
<div class="t" style="left:1244.6px;top:154.6px;font-size:15.8px;transform:scaleX(0.74);transform-origin:0 0;color:#f0f0f0">88.76</div>
<div class="t" style="left:1280.7px;top:154.6px;font-size:15.8px;transform:scaleX(0.74);transform-origin:0 0;color:#f0f0f0">97.21</div>
<div class="t" style="left:1335.2px;top:154.6px;font-size:15.8px;transform:scaleX(0.74);transform-origin:0 0;color:#f0f0f0">326.91</div>
<div class="t" style="left:1401.0px;top:154.6px;font-size:15.8px;transform:scaleX(0.74);transform-origin:0 0;color:#f0f0f0">33.21</div>
<div class="t" style="left:3px;top:179.1px;font-size:15.8px;transform:scaleX(0.74);transform-origin:0 0;color:#f0f0f0">&Delta;E 2000</div>
<div class="t" style="left:84.6px;top:179.1px;font-size:15.8px;transform:scaleX(0.74);transform-origin:0 0;color:#f0f0f0">7.30</div>
<div class="t" style="left:127.1px;top:179.1px;font-size:15.8px;transform:scaleX(0.74);transform-origin:0 0;color:#f0f0f0">6.10</div>
<div class="t" style="left:170.9px;top:179.1px;font-size:15.8px;transform:scaleX(0.74);transform-origin:0 0;color:#f0f0f0">5.38</div>
<div class="t" style="left:214.8px;top:179.1px;font-size:15.8px;transform:scaleX(0.74);transform-origin:0 0;color:#f0f0f0">4.73</div>
<div class="t" style="left:258.6px;top:179.1px;font-size:15.8px;transform:scaleX(0.74);transform-origin:0 0;color:#f0f0f0">4.02</div>
<div class="t" style="left:302.4px;top:179.1px;font-size:15.8px;transform:scaleX(0.74);transform-origin:0 0;color:#f0f0f0">1.29</div>
<div class="t" style="left:338.3px;top:179.1px;font-size:15.8px;transform:scaleX(0.74);transform-origin:0 0;color:#f0f0f0">2.04</div>
<div class="t" style="left:390.0px;top:179.1px;font-size:15.8px;transform:scaleX(0.74);transform-origin:0 0;color:#f0f0f0">3.04</div>
<div class="t" style="left:443.2px;top:179.1px;font-size:15.8px;transform:scaleX(0.74);transform-origin:0 0;color:#f0f0f0">2.60</div>
<div class="t" style="left:490.3px;top:179.1px;font-size:15.8px;transform:scaleX(0.74);transform-origin:0 0;color:#f0f0f0">2.09</div>
<div class="t" style="left:531.5px;top:179.1px;font-size:15.8px;transform:scaleX(0.74);transform-origin:0 0;color:#f0f0f0">2.69</div>
<div class="t" style="left:595.2px;top:179.1px;font-size:15.8px;transform:scaleX(0.74);transform-origin:0 0;color:#f0f0f0">2.78</div>
<div class="t" style="left:663.8px;top:179.1px;font-size:15.8px;transform:scaleX(0.74);transform-origin:0 0;color:#f0f0f0">3.94</div>
<div class="t" style="left:706.3px;top:179.1px;font-size:15.8px;transform:scaleX(0.74);transform-origin:0 0;color:#f0f0f0">2.35</div>
<div class="t" style="left:777.2px;top:179.1px;font-size:15.8px;transform:scaleX(0.74);transform-origin:0 0;color:#f0f0f0">2.81</div>
<div class="t" style="left:853.4px;top:179.1px;font-size:15.8px;transform:scaleX(0.74);transform-origin:0 0;color:#f0f0f0">4.18</div>
<div class="t" style="left:891.4px;top:179.1px;font-size:15.8px;transform:scaleX(0.74);transform-origin:0 0;color:#f0f0f0">2.18</div>
<div class="t" style="left:961.8px;top:179.1px;font-size:15.8px;transform:scaleX(0.74);transform-origin:0 0;color:#f0f0f0">4.75</div>
<div class="t" style="left:1038.7px;top:179.1px;font-size:15.8px;transform:scaleX(0.74);transform-origin:0 0;color:#f0f0f0">3.58</div>
<div class="t" style="left:1074.3px;top:179.1px;font-size:15.8px;transform:scaleX(0.74);transform-origin:0 0;color:#f0f0f0">1.88</div>
<div class="t" style="left:1116.6px;top:179.1px;font-size:15.8px;transform:scaleX(0.74);transform-origin:0 0;color:#f0f0f0">2.36</div>
<div class="t" style="left:1152.4px;top:179.1px;font-size:15.8px;transform:scaleX(0.74);transform-origin:0 0;color:#f0f0f0">4.15</div>
<div class="t" style="left:1194.7px;top:179.1px;font-size:15.8px;transform:scaleX(0.74);transform-origin:0 0;color:#f0f0f0">3.21</div>
<div class="t" style="left:1244.6px;top:179.1px;font-size:15.8px;transform:scaleX(0.74);transform-origin:0 0;color:#f0f0f0">3.91</div>
<div class="t" style="left:1280.7px;top:179.1px;font-size:15.8px;transform:scaleX(0.74);transform-origin:0 0;color:#f0f0f0">2.51</div>
<div class="t" style="left:1335.2px;top:179.1px;font-size:15.8px;transform:scaleX(0.74);transform-origin:0 0;color:#f0f0f0">1.76</div>
<div class="t" style="left:1401.0px;top:179.1px;font-size:15.8px;transform:scaleX(0.74);transform-origin:0 0;color:#f0f0f0">6.34</div>
<div class="t" style="left:3px;top:203.6px;font-size:15.8px;transform:scaleX(0.74);transform-origin:0 0;color:#f0f0f0">dEITP</div>
<div class="t" style="left:84.6px;top:203.6px;font-size:15.8px;transform:scaleX(0.74);transform-origin:0 0;color:#f0f0f0">8.62</div>
<div class="t" style="left:127.1px;top:203.6px;font-size:15.8px;transform:scaleX(0.74);transform-origin:0 0;color:#f0f0f0">7.83</div>
<div class="t" style="left:170.9px;top:203.6px;font-size:15.8px;transform:scaleX(0.74);transform-origin:0 0;color:#f0f0f0">7.39</div>
<div class="t" style="left:214.8px;top:203.6px;font-size:15.8px;transform:scaleX(0.74);transform-origin:0 0;color:#f0f0f0">7.24</div>
<div class="t" style="left:258.6px;top:203.6px;font-size:15.8px;transform:scaleX(0.74);transform-origin:0 0;color:#f0f0f0">7.14</div>
<div class="t" style="left:302.4px;top:203.6px;font-size:15.8px;transform:scaleX(0.74);transform-origin:0 0;color:#f0f0f0">75.44</div>
<div class="t" style="left:338.3px;top:203.6px;font-size:15.8px;transform:scaleX(0.74);transform-origin:0 0;color:#f0f0f0">7.38</div>
<div class="t" style="left:390.0px;top:203.6px;font-size:15.8px;transform:scaleX(0.74);transform-origin:0 0;color:#f0f0f0">9.46</div>
<div class="t" style="left:443.2px;top:203.6px;font-size:15.8px;transform:scaleX(0.74);transform-origin:0 0;color:#f0f0f0">6.53</div>
<div class="t" style="left:490.3px;top:203.6px;font-size:15.8px;transform:scaleX(0.74);transform-origin:0 0;color:#f0f0f0">6.35</div>
<div class="t" style="left:531.5px;top:203.6px;font-size:15.8px;transform:scaleX(0.74);transform-origin:0 0;color:#f0f0f0">7.05</div>
<div class="t" style="left:595.2px;top:203.6px;font-size:15.8px;transform:scaleX(0.74);transform-origin:0 0;color:#f0f0f0">5.77</div>
<div class="t" style="left:663.8px;top:203.6px;font-size:15.8px;transform:scaleX(0.74);transform-origin:0 0;color:#f0f0f0">11.70</div>
<div class="t" style="left:706.3px;top:203.6px;font-size:15.8px;transform:scaleX(0.74);transform-origin:0 0;color:#f0f0f0">7.31</div>
<div class="t" style="left:777.2px;top:203.6px;font-size:15.8px;transform:scaleX(0.74);transform-origin:0 0;color:#f0f0f0">11.61</div>
<div class="t" style="left:853.4px;top:203.6px;font-size:15.8px;transform:scaleX(0.74);transform-origin:0 0;color:#f0f0f0">18.08</div>
<div class="t" style="left:891.4px;top:203.6px;font-size:15.8px;transform:scaleX(0.74);transform-origin:0 0;color:#f0f0f0">6.35</div>
<div class="t" style="left:961.8px;top:203.6px;font-size:15.8px;transform:scaleX(0.74);transform-origin:0 0;color:#f0f0f0">11.02</div>
<div class="t" style="left:1038.7px;top:203.6px;font-size:15.8px;transform:scaleX(0.74);transform-origin:0 0;color:#f0f0f0">10.18</div>
<div class="t" style="left:1074.3px;top:203.6px;font-size:15.8px;transform:scaleX(0.74);transform-origin:0 0;color:#f0f0f0">5.78</div>
<div class="t" style="left:1116.6px;top:203.6px;font-size:15.8px;transform:scaleX(0.74);transform-origin:0 0;color:#f0f0f0">8.18</div>
<div class="t" style="left:1152.4px;top:203.6px;font-size:15.8px;transform:scaleX(0.74);transform-origin:0 0;color:#f0f0f0">10.02</div>
<div class="t" style="left:1194.7px;top:203.6px;font-size:15.8px;transform:scaleX(0.74);transform-origin:0 0;color:#f0f0f0">11.14</div>
<div class="t" style="left:1244.6px;top:203.6px;font-size:15.8px;transform:scaleX(0.74);transform-origin:0 0;color:#f0f0f0">6.75</div>
<div class="t" style="left:1280.7px;top:203.6px;font-size:15.8px;transform:scaleX(0.74);transform-origin:0 0;color:#f0f0f0">8.65</div>
<div class="t" style="left:1335.2px;top:203.6px;font-size:15.8px;transform:scaleX(0.74);transform-origin:0 0;color:#f0f0f0">7.73</div>
<div class="t" style="left:1401.0px;top:203.6px;font-size:15.8px;transform:scaleX(0.74);transform-origin:0 0;color:#f0f0f0">16.20</div>
</div>
<div class="a" style="left:501px;top:952px;width:1418px;height:15px;background:#6a6a6a"></div>
<div class="a" style="left:502px;top:953px;width:12px;height:13px;background:#7c7c7c;border-radius:2px"></div>
<div class="a" style="left:506px;top:956px;width:0;height:0;border-top:4px solid transparent;border-bottom:4px solid transparent;border-right:5px solid #333"></div>
<div class="a" style="left:515px;top:953px;width:837px;height:13px;background:#474747;border-radius:6px"></div>
<div class="a" style="left:1906px;top:953px;width:12px;height:13px;background:#7c7c7c;border-radius:2px"></div>
<div class="a" style="left:1910px;top:956px;width:0;height:0;border-top:4px solid transparent;border-bottom:4px solid transparent;border-left:5px solid #333"></div>
<div class="a" style="left:150px;top:1010px;width:1770px;height:48px;background:#3a3a3a"></div>
<div class="a" style="left:151px;top:1011px;width:37px;height:37px;background:linear-gradient(#8a8a8a,#6e6e6e 60%,#5a5a5a);border-radius:3px;border-top:1px solid #999"></div>
<div class="a" style="left:188px;top:1012px;width:2px;height:36px;background:#262626"></div>
<div class="a" style="left:155px;top:1015.5px;width:29.5px;height:17.5px;background:#ffffff;border-radius:2px;border:1px solid rgba(0,0,0,.25)"></div>
<div class="t" style="left:148px;top:1037px;width:43px;text-align:center;font-size:8.4px;color:#1c1c1c;transform:scaleX(0.9)">White</div>
<div class="a" style="left:190px;top:1011px;width:37px;height:37px;background:linear-gradient(#8a8a8a,#6e6e6e 60%,#5a5a5a);border-radius:3px;border-top:1px solid #999"></div>
<div class="a" style="left:227px;top:1012px;width:2px;height:36px;background:#262626"></div>
<div class="a" style="left:194px;top:1015.5px;width:29.5px;height:17.5px;background:#e6e6e6;border-radius:2px;border:1px solid rgba(0,0,0,.25)"></div>
<div class="t" style="left:187px;top:1037px;width:43px;text-align:center;font-size:8.4px;color:#1c1c1c;transform:scaleX(0.9)">Gray 80</div>
<div class="a" style="left:229px;top:1011px;width:37px;height:37px;background:linear-gradient(#8a8a8a,#6e6e6e 60%,#5a5a5a);border-radius:3px;border-top:1px solid #999"></div>
<div class="a" style="left:266px;top:1012px;width:2px;height:36px;background:#262626"></div>
<div class="a" style="left:233px;top:1015.5px;width:29.5px;height:17.5px;background:#d2d2d2;border-radius:2px;border:1px solid rgba(0,0,0,.25)"></div>
<div class="t" style="left:226px;top:1037px;width:43px;text-align:center;font-size:8.4px;color:#1c1c1c;transform:scaleX(0.9)">Gray 65</div>
<div class="a" style="left:268px;top:1011px;width:37px;height:37px;background:linear-gradient(#8a8a8a,#6e6e6e 60%,#5a5a5a);border-radius:3px;border-top:1px solid #999"></div>
<div class="a" style="left:305px;top:1012px;width:2px;height:36px;background:#262626"></div>
<div class="a" style="left:272px;top:1015.5px;width:29.5px;height:17.5px;background:#bcbcbc;border-radius:2px;border:1px solid rgba(0,0,0,.25)"></div>
<div class="t" style="left:265px;top:1037px;width:43px;text-align:center;font-size:8.4px;color:#1c1c1c;transform:scaleX(0.9)">Gray 50</div>
<div class="a" style="left:307px;top:1011px;width:37px;height:37px;background:linear-gradient(#8a8a8a,#6e6e6e 60%,#5a5a5a);border-radius:3px;border-top:1px solid #999"></div>
<div class="a" style="left:344px;top:1012px;width:2px;height:36px;background:#262626"></div>
<div class="a" style="left:311px;top:1015.5px;width:29.5px;height:17.5px;background:#a2a2a2;border-radius:2px;border:1px solid rgba(0,0,0,.25)"></div>
<div class="t" style="left:304px;top:1037px;width:43px;text-align:center;font-size:8.4px;color:#1c1c1c;transform:scaleX(0.9)">Gray 35</div>
<div class="a" style="left:346px;top:1011px;width:37px;height:37px;background:linear-gradient(#8a8a8a,#6e6e6e 60%,#5a5a5a);border-radius:3px;border-top:1px solid #999"></div>
<div class="a" style="left:383px;top:1012px;width:2px;height:36px;background:#262626"></div>
<div class="a" style="left:350px;top:1015.5px;width:29.5px;height:17.5px;background:#000000;border-radius:2px;border:1px solid rgba(0,0,0,.25)"></div>
<div class="t" style="left:343px;top:1037px;width:43px;text-align:center;font-size:8.4px;color:#1c1c1c;transform:scaleX(0.9)">Black</div>
<div class="a" style="left:385px;top:1011px;width:37px;height:37px;background:linear-gradient(#8a8a8a,#6e6e6e 60%,#5a5a5a);border-radius:3px;border-top:1px solid #999"></div>
<div class="a" style="left:422px;top:1012px;width:2px;height:36px;background:#262626"></div>
<div class="a" style="left:389px;top:1015.5px;width:29.5px;height:17.5px;background:#735244;border-radius:2px;border:1px solid rgba(0,0,0,.25)"></div>
<div class="t" style="left:382px;top:1037px;width:43px;text-align:center;font-size:8.4px;color:#1c1c1c;transform:scaleX(0.9)">Dark Skin</div>
<div class="a" style="left:424px;top:1011px;width:37px;height:37px;background:linear-gradient(#8a8a8a,#6e6e6e 60%,#5a5a5a);border-radius:3px;border-top:1px solid #999"></div>
<div class="a" style="left:461px;top:1012px;width:2px;height:36px;background:#262626"></div>
<div class="a" style="left:428px;top:1015.5px;width:29.5px;height:17.5px;background:#c29682;border-radius:2px;border:1px solid rgba(0,0,0,.25)"></div>
<div class="t" style="left:421px;top:1037px;width:43px;text-align:center;font-size:8.4px;color:#1c1c1c;transform:scaleX(0.9)">Light Skin</div>
<div class="a" style="left:463px;top:1011px;width:37px;height:37px;background:linear-gradient(#8a8a8a,#6e6e6e 60%,#5a5a5a);border-radius:3px;border-top:1px solid #999"></div>
<div class="a" style="left:500px;top:1012px;width:2px;height:36px;background:#262626"></div>
<div class="a" style="left:467px;top:1015.5px;width:29.5px;height:17.5px;background:#5f7ea5;border-radius:2px;border:1px solid rgba(0,0,0,.25)"></div>
<div class="t" style="left:460px;top:1037px;width:43px;text-align:center;font-size:8.4px;color:#1c1c1c;transform:scaleX(0.9)">Blue Sky</div>
<div class="a" style="left:502px;top:1011px;width:37px;height:37px;background:linear-gradient(#8a8a8a,#6e6e6e 60%,#5a5a5a);border-radius:3px;border-top:1px solid #999"></div>
<div class="a" style="left:539px;top:1012px;width:2px;height:36px;background:#262626"></div>
<div class="a" style="left:506px;top:1015.5px;width:29.5px;height:17.5px;background:#5a6c42;border-radius:2px;border:1px solid rgba(0,0,0,.25)"></div>
<div class="t" style="left:499px;top:1037px;width:43px;text-align:center;font-size:8.4px;color:#1c1c1c;transform:scaleX(0.9)">Foliage</div>
<div class="a" style="left:541px;top:1011px;width:37px;height:37px;background:linear-gradient(#8a8a8a,#6e6e6e 60%,#5a5a5a);border-radius:3px;border-top:1px solid #999"></div>
<div class="a" style="left:578px;top:1012px;width:2px;height:36px;background:#262626"></div>
<div class="a" style="left:544px;top:1015px;width:30px;height:9px;background:#8283b5;border-radius:2px;border:1px solid rgba(0,0,0,.25)"></div>
<div class="t" style="left:538px;top:1028px;width:43px;text-align:center;font-size:8.4px;line-height:9px;color:#1c1c1c;transform:scaleX(0.9)">Blue<br>Flower</div>
<div class="a" style="left:580px;top:1011px;width:37px;height:37px;background:linear-gradient(#8a8a8a,#6e6e6e 60%,#5a5a5a);border-radius:3px;border-top:1px solid #999"></div>
<div class="a" style="left:617px;top:1012px;width:2px;height:36px;background:#262626"></div>
<div class="a" style="left:583px;top:1015px;width:30px;height:9px;background:#62bda8;border-radius:2px;border:1px solid rgba(0,0,0,.25)"></div>
<div class="t" style="left:577px;top:1028px;width:43px;text-align:center;font-size:8.4px;line-height:9px;color:#1c1c1c;transform:scaleX(0.9)">Bluish<br>Green</div>
<div class="a" style="left:619px;top:1011px;width:37px;height:37px;background:linear-gradient(#8a8a8a,#6e6e6e 60%,#5a5a5a);border-radius:3px;border-top:1px solid #999"></div>
<div class="a" style="left:656px;top:1012px;width:2px;height:36px;background:#262626"></div>
<div class="a" style="left:623px;top:1015.5px;width:29.5px;height:17.5px;background:#e07a2a;border-radius:2px;border:1px solid rgba(0,0,0,.25)"></div>
<div class="t" style="left:616px;top:1037px;width:43px;text-align:center;font-size:8.4px;color:#1c1c1c;transform:scaleX(0.9)">Orange</div>
<div class="a" style="left:658px;top:1011px;width:37px;height:37px;background:linear-gradient(#8a8a8a,#6e6e6e 60%,#5a5a5a);border-radius:3px;border-top:1px solid #999"></div>
<div class="a" style="left:695px;top:1012px;width:2px;height:36px;background:#262626"></div>
<div class="a" style="left:661px;top:1015px;width:30px;height:9px;background:#4a5cab;border-radius:2px;border:1px solid rgba(0,0,0,.25)"></div>
<div class="t" style="left:655px;top:1028px;width:43px;text-align:center;font-size:8.4px;line-height:9px;color:#1c1c1c;transform:scaleX(0.9)">Purplish<br>Blue</div>
<div class="a" style="left:697px;top:1011px;width:37px;height:37px;background:linear-gradient(#8a8a8a,#6e6e6e 60%,#5a5a5a);border-radius:3px;border-top:1px solid #999"></div>
<div class="a" style="left:734px;top:1012px;width:2px;height:36px;background:#262626"></div>
<div class="a" style="left:700px;top:1015px;width:30px;height:9px;background:#c25461;border-radius:2px;border:1px solid rgba(0,0,0,.25)"></div>
<div class="t" style="left:694px;top:1028px;width:43px;text-align:center;font-size:8.4px;line-height:9px;color:#1c1c1c;transform:scaleX(0.9)">Moderate<br>Red</div>
<div class="a" style="left:736px;top:1011px;width:37px;height:37px;background:linear-gradient(#8a8a8a,#6e6e6e 60%,#5a5a5a);border-radius:3px;border-top:1px solid #999"></div>
<div class="a" style="left:773px;top:1012px;width:2px;height:36px;background:#262626"></div>
<div class="a" style="left:740px;top:1015.5px;width:29.5px;height:17.5px;background:#5e3c6c;border-radius:2px;border:1px solid rgba(0,0,0,.25)"></div>
<div class="t" style="left:733px;top:1037px;width:43px;text-align:center;font-size:8.4px;color:#1c1c1c;transform:scaleX(0.9)">Purple</div>
<div class="a" style="left:775px;top:1011px;width:37px;height:37px;background:linear-gradient(#8a8a8a,#6e6e6e 60%,#5a5a5a);border-radius:3px;border-top:1px solid #999"></div>
<div class="a" style="left:812px;top:1012px;width:2px;height:36px;background:#262626"></div>
<div class="a" style="left:778px;top:1015px;width:30px;height:9px;background:#9dbb40;border-radius:2px;border:1px solid rgba(0,0,0,.25)"></div>
<div class="t" style="left:772px;top:1028px;width:43px;text-align:center;font-size:8.4px;line-height:9px;color:#1c1c1c;transform:scaleX(0.9)">Yellow<br>Green</div>
<div class="a" style="left:814px;top:1011px;width:37px;height:37px;background:linear-gradient(#8a8a8a,#6e6e6e 60%,#5a5a5a);border-radius:3px;border-top:1px solid #999"></div>
<div class="a" style="left:851px;top:1012px;width:2px;height:36px;background:#262626"></div>
<div class="a" style="left:817px;top:1015px;width:30px;height:9px;background:#e3a12e;border-radius:2px;border:1px solid rgba(0,0,0,.25)"></div>
<div class="t" style="left:811px;top:1028px;width:43px;text-align:center;font-size:8.4px;line-height:9px;color:#1c1c1c;transform:scaleX(0.9)">Orange<br>Yellow</div>
<div class="a" style="left:853px;top:1011px;width:37px;height:37px;background:linear-gradient(#8a8a8a,#6e6e6e 60%,#5a5a5a);border-radius:3px;border-top:1px solid #999"></div>
<div class="a" style="left:890px;top:1012px;width:2px;height:36px;background:#262626"></div>
<div class="a" style="left:857px;top:1015.5px;width:29.5px;height:17.5px;background:#3344a0;border-radius:2px;border:1px solid rgba(0,0,0,.25)"></div>
<div class="t" style="left:850px;top:1037px;width:43px;text-align:center;font-size:8.4px;color:#1c1c1c;transform:scaleX(0.9)">Blue</div>
<div class="a" style="left:892px;top:1011px;width:37px;height:37px;background:linear-gradient(#8a8a8a,#6e6e6e 60%,#5a5a5a);border-radius:3px;border-top:1px solid #999"></div>
<div class="a" style="left:929px;top:1012px;width:2px;height:36px;background:#262626"></div>
<div class="a" style="left:896px;top:1015.5px;width:29.5px;height:17.5px;background:#469a48;border-radius:2px;border:1px solid rgba(0,0,0,.25)"></div>
<div class="t" style="left:889px;top:1037px;width:43px;text-align:center;font-size:8.4px;color:#1c1c1c;transform:scaleX(0.9)">Green</div>
<div class="a" style="left:931px;top:1011px;width:37px;height:37px;background:linear-gradient(#8a8a8a,#6e6e6e 60%,#5a5a5a);border-radius:3px;border-top:1px solid #999"></div>
<div class="a" style="left:968px;top:1012px;width:2px;height:36px;background:#262626"></div>
<div class="a" style="left:935px;top:1015.5px;width:29.5px;height:17.5px;background:#b02a32;border-radius:2px;border:1px solid rgba(0,0,0,.25)"></div>
<div class="t" style="left:928px;top:1037px;width:43px;text-align:center;font-size:8.4px;color:#1c1c1c;transform:scaleX(0.9)">Red</div>
<div class="a" style="left:970px;top:1011px;width:37px;height:37px;background:linear-gradient(#8a8a8a,#6e6e6e 60%,#5a5a5a);border-radius:3px;border-top:1px solid #999"></div>
<div class="a" style="left:1007px;top:1012px;width:2px;height:36px;background:#262626"></div>
<div class="a" style="left:974px;top:1015.5px;width:29.5px;height:17.5px;background:#eac420;border-radius:2px;border:1px solid rgba(0,0,0,.25)"></div>
<div class="t" style="left:967px;top:1037px;width:43px;text-align:center;font-size:8.4px;color:#1c1c1c;transform:scaleX(0.9)">Yellow</div>
<div class="a" style="left:1009px;top:1011px;width:37px;height:37px;background:linear-gradient(#8a8a8a,#6e6e6e 60%,#5a5a5a);border-radius:3px;border-top:1px solid #999"></div>
<div class="a" style="left:1046px;top:1012px;width:2px;height:36px;background:#262626"></div>
<div class="a" style="left:1013px;top:1015.5px;width:29.5px;height:17.5px;background:#bb5696;border-radius:2px;border:1px solid rgba(0,0,0,.25)"></div>
<div class="t" style="left:1006px;top:1037px;width:43px;text-align:center;font-size:8.4px;color:#1c1c1c;transform:scaleX(0.9)">Magenta</div>
<div class="a" style="left:1048px;top:1011px;width:37px;height:37px;background:linear-gradient(#8a8a8a,#6e6e6e 60%,#5a5a5a);border-radius:3px;border-top:1px solid #999"></div>
<div class="a" style="left:1085px;top:1012px;width:2px;height:36px;background:#262626"></div>
<div class="a" style="left:1052px;top:1015.5px;width:29.5px;height:17.5px;background:#0990a8;border-radius:2px;border:1px solid rgba(0,0,0,.25)"></div>
<div class="t" style="left:1045px;top:1037px;width:43px;text-align:center;font-size:8.4px;color:#1c1c1c;transform:scaleX(0.9)">Cyan</div>
<div class="a" style="left:1087px;top:1011px;width:37px;height:37px;background:linear-gradient(#8a8a8a,#6e6e6e 60%,#5a5a5a);border-radius:3px;border-top:1px solid #999"></div>
<div class="a" style="left:1124px;top:1012px;width:2px;height:36px;background:#262626"></div>
<div class="a" style="left:1091px;top:1015.5px;width:29.5px;height:17.5px;background:#ff0000;border-radius:2px;border:1px solid rgba(0,0,0,.25)"></div>
<div class="t" style="left:1084px;top:1037px;width:43px;text-align:center;font-size:8.4px;color:#1c1c1c;transform:scaleX(0.9)">100% Red</div>
<div class="a" style="left:1126px;top:1011px;width:37px;height:37px;background:linear-gradient(#8a8a8a,#6e6e6e 60%,#5a5a5a);border-radius:3px;border-top:1px solid #999"></div>
<div class="a" style="left:1163px;top:1012px;width:2px;height:36px;background:#262626"></div>
<div class="a" style="left:1129px;top:1015px;width:30px;height:9px;background:#00ff00;border-radius:2px;border:1px solid rgba(0,0,0,.25)"></div>
<div class="t" style="left:1123px;top:1028px;width:43px;text-align:center;font-size:8.4px;line-height:9px;color:#1c1c1c;transform:scaleX(0.9)">100%<br>Green</div>
<div class="a" style="left:1165px;top:1011px;width:37px;height:37px;background:linear-gradient(#8a8a8a,#6e6e6e 60%,#5a5a5a);border-radius:3px;border-top:1px solid #999"></div>
<div class="a" style="left:1202px;top:1012px;width:2px;height:36px;background:#262626"></div>
<div class="a" style="left:1168px;top:1015px;width:30px;height:9px;background:#0000ff;border-radius:2px;border:1px solid rgba(0,0,0,.25)"></div>
<div class="t" style="left:1162px;top:1028px;width:43px;text-align:center;font-size:8.4px;line-height:9px;color:#1c1c1c;transform:scaleX(0.9)">100%<br>Blue</div>
<div class="a" style="left:1204px;top:1011px;width:37px;height:37px;background:linear-gradient(#8a8a8a,#6e6e6e 60%,#5a5a5a);border-radius:3px;border-top:1px solid #999"></div>
<div class="a" style="left:1241px;top:1012px;width:2px;height:36px;background:#262626"></div>
<div class="a" style="left:1207px;top:1015px;width:30px;height:9px;background:#00ffff;border-radius:2px;border:1px solid rgba(0,0,0,.25)"></div>
<div class="t" style="left:1201px;top:1028px;width:43px;text-align:center;font-size:8.4px;line-height:9px;color:#1c1c1c;transform:scaleX(0.9)">100%<br>Cyan</div>
<div class="a" style="left:1243px;top:1011px;width:37px;height:37px;background:linear-gradient(#8a8a8a,#6e6e6e 60%,#5a5a5a);border-radius:3px;border-top:1px solid #999"></div>
<div class="a" style="left:1280px;top:1012px;width:2px;height:36px;background:#262626"></div>
<div class="a" style="left:1246px;top:1015px;width:30px;height:9px;background:#ff00ff;border-radius:2px;border:1px solid rgba(0,0,0,.25)"></div>
<div class="t" style="left:1240px;top:1028px;width:43px;text-align:center;font-size:8.4px;line-height:9px;color:#1c1c1c;transform:scaleX(0.9)">100%<br>Magenta</div>
<div class="a" style="left:1282px;top:1011px;width:37px;height:37px;background:linear-gradient(#8a8a8a,#6e6e6e 60%,#5a5a5a);border-radius:3px;border-top:1px solid #999"></div>
<div class="a" style="left:1319px;top:1012px;width:2px;height:36px;background:#262626"></div>
<div class="a" style="left:1285px;top:1015px;width:30px;height:9px;background:#ffff00;border-radius:2px;border:1px solid rgba(0,0,0,.25)"></div>
<div class="t" style="left:1279px;top:1028px;width:43px;text-align:center;font-size:8.4px;line-height:9px;color:#1c1c1c;transform:scaleX(0.9)">100%<br>Yellow</div>
<div class="a" style="left:1321px;top:1011px;width:37px;height:37px;background:linear-gradient(#8a8a8a,#6e6e6e 60%,#5a5a5a);border-radius:3px;border-top:1px solid #999"></div>
<div class="a" style="left:1358px;top:1012px;width:2px;height:36px;background:#262626"></div>
<div class="a" style="left:1325px;top:1015.5px;width:29.5px;height:17.5px;background:#73422a;border-radius:2px;border:1px solid rgba(0,0,0,.25)"></div>
<div class="t" style="left:1318px;top:1037px;width:43px;text-align:center;font-size:8.4px;color:#1c1c1c;transform:scaleX(0.9)">2E</div>
<div class="a" style="left:1360px;top:1011px;width:37px;height:37px;background:linear-gradient(#8a8a8a,#6e6e6e 60%,#5a5a5a);border-radius:3px;border-top:1px solid #999"></div>
<div class="a" style="left:1397px;top:1012px;width:2px;height:36px;background:#262626"></div>
<div class="a" style="left:1364px;top:1015.5px;width:29.5px;height:17.5px;background:#c88860;border-radius:2px;border:1px solid rgba(0,0,0,.25)"></div>
<div class="t" style="left:1357px;top:1037px;width:43px;text-align:center;font-size:8.4px;color:#1c1c1c;transform:scaleX(0.9)">2F</div>
<div class="a" style="left:1399px;top:1011px;width:37px;height:37px;background:linear-gradient(#8a8a8a,#6e6e6e 60%,#5a5a5a);border-radius:3px;border-top:1px solid #999"></div>
<div class="a" style="left:1436px;top:1012px;width:2px;height:36px;background:#262626"></div>
<div class="a" style="left:1403px;top:1015.5px;width:29.5px;height:17.5px;background:#fec090;border-radius:2px;border:1px solid rgba(0,0,0,.25)"></div>
<div class="t" style="left:1396px;top:1037px;width:43px;text-align:center;font-size:8.4px;color:#1c1c1c;transform:scaleX(0.9)">2K</div>
<div class="a" style="left:1438px;top:1011px;width:37px;height:37px;background:linear-gradient(#8a8a8a,#6e6e6e 60%,#5a5a5a);border-radius:3px;border-top:1px solid #999"></div>
<div class="a" style="left:1475px;top:1012px;width:2px;height:36px;background:#262626"></div>
<div class="a" style="left:1442px;top:1015.5px;width:29.5px;height:17.5px;background:#fcc8a8;border-radius:2px;border:1px solid rgba(0,0,0,.25)"></div>
<div class="t" style="left:1435px;top:1037px;width:43px;text-align:center;font-size:8.4px;color:#1c1c1c;transform:scaleX(0.9)">5D</div>
<div class="a" style="left:1477px;top:1011px;width:37px;height:37px;background:linear-gradient(#8a8a8a,#6e6e6e 60%,#5a5a5a);border-radius:3px;border-top:1px solid #999"></div>
<div class="a" style="left:1514px;top:1012px;width:2px;height:36px;background:#262626"></div>
<div class="a" style="left:1481px;top:1015.5px;width:29.5px;height:17.5px;background:#f0a070;border-radius:2px;border:1px solid rgba(0,0,0,.25)"></div>
<div class="t" style="left:1474px;top:1037px;width:43px;text-align:center;font-size:8.4px;color:#1c1c1c;transform:scaleX(0.9)">7E</div>
<div class="a" style="left:1516px;top:1011px;width:37px;height:37px;background:linear-gradient(#8a8a8a,#6e6e6e 60%,#5a5a5a);border-radius:3px;border-top:1px solid #999"></div>
<div class="a" style="left:1553px;top:1012px;width:2px;height:36px;background:#262626"></div>
<div class="a" style="left:1520px;top:1015.5px;width:29.5px;height:17.5px;background:#d89860;border-radius:2px;border:1px solid rgba(0,0,0,.25)"></div>
<div class="t" style="left:1513px;top:1037px;width:43px;text-align:center;font-size:8.4px;color:#1c1c1c;transform:scaleX(0.9)">7F</div>
<div class="a" style="left:1555px;top:1011px;width:37px;height:37px;background:linear-gradient(#8a8a8a,#6e6e6e 60%,#5a5a5a);border-radius:3px;border-top:1px solid #999"></div>
<div class="a" style="left:1592px;top:1012px;width:2px;height:36px;background:#262626"></div>
<div class="a" style="left:1559px;top:1015.5px;width:29.5px;height:17.5px;background:#9a5a30;border-radius:2px;border:1px solid rgba(0,0,0,.25)"></div>
<div class="t" style="left:1552px;top:1037px;width:43px;text-align:center;font-size:8.4px;color:#1c1c1c;transform:scaleX(0.9)">7G</div>
<div class="a" style="left:1594px;top:1011px;width:37px;height:37px;background:linear-gradient(#8a8a8a,#6e6e6e 60%,#5a5a5a);border-radius:3px;border-top:1px solid #999"></div>
<div class="a" style="left:1631px;top:1012px;width:2px;height:36px;background:#262626"></div>
<div class="a" style="left:1598px;top:1015.5px;width:29.5px;height:17.5px;background:#d8a080;border-radius:2px;border:1px solid rgba(0,0,0,.25)"></div>
<div class="t" style="left:1591px;top:1037px;width:43px;text-align:center;font-size:8.4px;color:#1c1c1c;transform:scaleX(0.9)">7H</div>
<div class="a" style="left:1633px;top:1011px;width:37px;height:37px;background:linear-gradient(#8a8a8a,#6e6e6e 60%,#5a5a5a);border-radius:3px;border-top:1px solid #999"></div>
<div class="a" style="left:1670px;top:1012px;width:2px;height:36px;background:#262626"></div>
<div class="a" style="left:1637px;top:1015.5px;width:29.5px;height:17.5px;background:#c06020;border-radius:2px;border:1px solid rgba(0,0,0,.25)"></div>
<div class="t" style="left:1630px;top:1037px;width:43px;text-align:center;font-size:8.4px;color:#1c1c1c;transform:scaleX(0.9)">7I</div>
<div class="a" style="left:151px;top:1049px;width:1530px;height:9px;background:#5a5a5a"></div>
<div class="a" style="left:152px;top:1050px;width:8px;height:7px;background:#7c7c7c"></div>
<div class="a" style="left:161px;top:1050px;width:1254px;height:7px;background:#464646;border-radius:4px"></div>
<div class="a" style="left:1671px;top:1050px;width:9px;height:7px;background:#7c7c7c"></div>
<div class="a" style="left:1681px;top:1010px;width:239px;height:48px;background:#2c2c2c"></div>
<div class="a" style="left:1681px;top:1026px;width:33px;height:32px;background:linear-gradient(#777,#555)"></div>
<div class="a" style="left:1685px;top:1031px;width:22px;height:22px;border:2px solid #222;border-radius:3px;background:#888"></div>
<div class="a" style="left:1692px;top:1038px;width:9px;height:9px;background:#000"></div>
<div class="a" style="left:1715px;top:1010px;width:33px;height:22px;background:linear-gradient(#7a7a7a,#5c5c5c);border-right:1px solid #444"></div>
<div class="a" style="left:1749px;top:1010px;width:33px;height:22px;background:linear-gradient(#7a7a7a,#5c5c5c);border-right:1px solid #444"></div>
<div class="a" style="left:1783px;top:1010px;width:33px;height:22px;background:linear-gradient(#7a7a7a,#5c5c5c);border-right:1px solid #444"></div>
<div class="a" style="left:1817px;top:1010px;width:33px;height:22px;background:linear-gradient(#7a7a7a,#5c5c5c);border-right:1px solid #444"></div>
<div class="a" style="left:1851px;top:1010px;width:33px;height:22px;background:linear-gradient(#7a7a7a,#5c5c5c);border-right:1px solid #444"></div>
<div class="a" style="left:1885px;top:1010px;width:33px;height:22px;background:linear-gradient(#7a7a7a,#5c5c5c);border-right:1px solid #444"></div>
<div class="a" style="left:1715px;top:1034px;width:101px;height:24px;background:linear-gradient(#bdbdbd,#9a9a9a);border-radius:3px 0 0 0"></div>
<div class="a" style="left:1817px;top:1034px;width:103px;height:24px;background:linear-gradient(#bdbdbd,#9a9a9a);border-radius:0 3px 0 0"></div>
<div class="t" style="left:1757px;top:1037px;font-size:17px;color:#333">Back</div>
<div class="t" style="left:1837px;top:1037px;font-size:17px;color:#333">Next</div>
<div class="a" style="left:1728px;top:1039px;width:14px;height:14px;border-radius:7px;background:#888"></div><div class="t" style="left:1730px;top:1039px;font-size:12px;color:#333">&laquo;</div>
<div class="a" style="left:1890px;top:1039px;width:14px;height:14px;border-radius:7px;background:#888"></div><div class="t" style="left:1893px;top:1039px;font-size:12px;color:#333">&raquo;</div>
<div class="t" style="left:1676px;top:1003px;font-size:27px;font-weight:bold;color:rgba(170,40,50,0.75);transform:scaleX(0.95);transform-origin:0 0;-webkit-text-stroke:1px rgba(255,255,255,0.35)">NOTEBOOK</div>
<div class="t" style="left:1823px;top:1003px;font-size:27px;font-weight:bold;color:rgba(60,60,60,0.5);transform:scaleX(0.95);transform-origin:0 0;-webkit-text-stroke:1px rgba(220,220,220,0.8)">CHECK</div>
<svg class="a" style="left:1628px;top:993px" width="75" height="65"><path d="M3 4 L42 12 M3 4 L7 42 L29 51 L70 38 L12 35" fill="none" stroke="rgba(255,255,255,0.35)" stroke-width="7" stroke-linejoin="round"/><path d="M3 4 L42 12 M3 4 L7 42 L29 51 L70 38 L12 35" fill="none" stroke="rgba(150,35,45,0.85)" stroke-width="4.5" stroke-linejoin="round"/><path d="M14 17 L26 26 L47 3" fill="none" stroke="rgba(240,240,240,0.85)" stroke-width="6"/><path d="M14 17 L26 26 L47 3" fill="none" stroke="#2a2a2a" stroke-width="3"/></svg>
</body></html>
